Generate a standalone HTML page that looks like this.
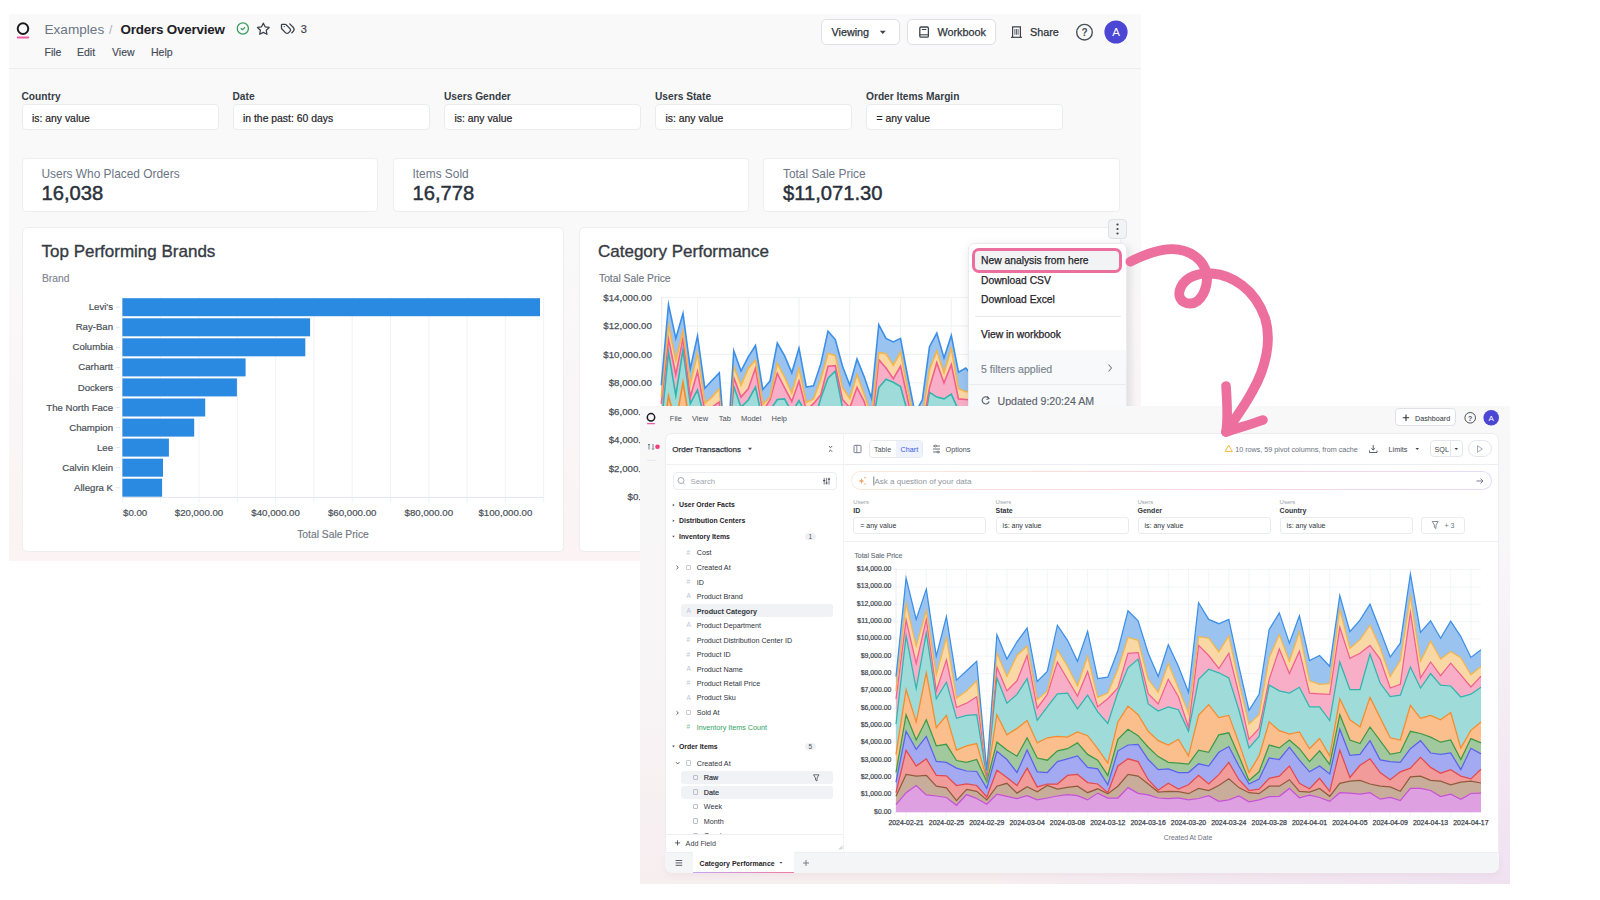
<!DOCTYPE html>
<html><head><meta charset="utf-8"><style>
html,body{margin:0;padding:0;width:1600px;height:900px;overflow:hidden;background:#fff;}
body{position:relative;font-family:"Liberation Sans",sans-serif;}
.t{position:absolute;line-height:1;white-space:nowrap;}
.b{position:absolute;}
svg.b{overflow:visible;}
</style></head><body>
<div class="b" style="left:8.5px;top:14px;width:1132.5px;height:547px;background:linear-gradient(180deg,#f9f9fa 0%,#f9f9fa 40%,#fbf3f4 100%);"></div>
<svg class="b" style="left:0;top:0" width="1600" height="900" viewBox="0 0 1600 900"><circle cx="23" cy="28.6" r="5.3" fill="none" stroke="#1b1b1f" stroke-width="2"/><rect x="16.8" y="36.6" width="12.4" height="1.8" rx="0.9" fill="#f25ca2"/></svg>
<div class="t" style="left:44.5px;top:22.70px;font-size:13.6px;color:#6b7585;font-weight:normal;">Examples</div>
<div class="t" style="left:109px;top:23.50px;font-size:12px;color:#a8aeb6;font-weight:normal;">/</div>
<div class="t" style="left:120.5px;top:22.80px;font-size:13.4px;color:#1d2125;font-weight:bold;letter-spacing:-0.2px;">Orders Overview</div>
<svg class="b" style="left:0;top:0" width="1600" height="900"><g transform="translate(235.4,21.06) scale(0.62)" fill="none" stroke="#3a9c5e" stroke-width="2.1" stroke-linecap="round" stroke-linejoin="round"><circle cx="12" cy="12" r="9"/><path d="M9.3 12.3l1.9 1.6l3.6 -3.1"/></g><g transform="translate(256.3,22.0) scale(0.585)" fill="none" stroke="#3d434b" stroke-width="2.2" stroke-linecap="round" stroke-linejoin="round"><path d="M12 17.75l-6.172 3.245l1.179 -6.873l-5 -4.867l6.9 -1l3.086 -6.253l3.086 6.253l6.9 1l-5 4.867l1.179 6.873z"/></g><g transform="translate(279.4,19.7) scale(0.69)" fill="none" stroke="#3d434b" stroke-width="1.9" stroke-linecap="round" stroke-linejoin="round"><path d="M3 8v4.172a2 2 0 0 0 .586 1.414l5.536 5.536a2.828 2.828 0 0 0 4 0l2.172 -2.172a2.828 2.828 0 0 0 0 -4l-5.536 -5.536a2 2 0 0 0 -1.414 -.586h-4.344a1 1 0 0 0 -1 1z"/><path d="M18 19l1.592 -1.592a4.82 4.82 0 0 0 0 -6.816l-4.592 -4.592"/><path d="M7 10h-.01"/></g></svg>
<div class="t" style="left:300.8px;top:24.00px;font-size:11px;color:#3d434b;font-weight:normal;-webkit-text-stroke:0.2px #3d434b;">3</div>
<div class="t" style="left:44.5px;top:46.85px;font-size:10.5px;color:#444b55;font-weight:normal;-webkit-text-stroke:0.15px #444b55;">File</div>
<div class="t" style="left:77px;top:46.85px;font-size:10.5px;color:#444b55;font-weight:normal;-webkit-text-stroke:0.15px #444b55;">Edit</div>
<div class="t" style="left:112px;top:46.85px;font-size:10.5px;color:#444b55;font-weight:normal;-webkit-text-stroke:0.15px #444b55;">View</div>
<div class="t" style="left:151px;top:46.85px;font-size:10.5px;color:#444b55;font-weight:normal;-webkit-text-stroke:0.15px #444b55;">Help</div>
<div class="b" style="left:8.5px;top:67.5px;width:1132.5px;height:1px;background:#eaedf0;"></div>
<div class="b" style="left:821px;top:18.5px;width:78.5px;height:26.5px;background:#fff;border:1px solid #dde1e6;border-radius:5px;box-sizing:border-box;"></div>
<div class="t" style="left:831.5px;top:27.00px;font-size:10.8px;color:#2e343b;font-weight:normal;-webkit-text-stroke:0.25px #2e343b;">Viewing</div>
<svg class="b" style="left:0;top:0" width="1600" height="900"><path d="M879.8,30.8 L885.8,30.8 L882.8,34 Z" fill="#3d434b"/><rect x="920.5" y="27" width="8" height="10" rx="1" fill="none" stroke="#3d434b" stroke-width="1.2"/><line x1="920.5" y1="34.5" x2="928.5" y2="34.5" stroke="#3d434b" stroke-width="1.2"/><path d="M1012.6,37.2 L1012.6,26.8 L1020.4,26.8 L1020.4,37.2" fill="none" stroke="#3d434b" stroke-width="1.2"/><line x1="1011" y1="37.3" x2="1022" y2="37.3" stroke="#3d434b" stroke-width="1.2"/><path d="M1014.9,29 L1014.9,34.8 M1016.5,29 L1016.5,34.8 M1018.1,29 L1018.1,34.8" stroke="#3d434b" stroke-width="0.8"/><circle cx="1084.5" cy="32.2" r="7.8" fill="none" stroke="#4a5058" stroke-width="1.4"/><circle cx="1116" cy="32" r="11.6" fill="#4b46d3"/></svg>
<div class="b" style="left:907px;top:18.5px;width:89px;height:26.5px;background:#fff;border:1px solid #dde1e6;border-radius:5px;box-sizing:border-box;"></div>
<svg class="b" style="left:0;top:0" width="1600" height="900"><rect x="919.8" y="27" width="8.6" height="10.2" rx="1.2" fill="none" stroke="#3d434b" stroke-width="1.3"/><line x1="919.8" y1="34.8" x2="928.4" y2="34.8" stroke="#3d434b" stroke-width="1.1"/><line x1="921.8" y1="29.5" x2="926.4" y2="29.5" stroke="#3d434b" stroke-width="1.1"/></svg>
<div class="t" style="left:937.5px;top:27.00px;font-size:10.8px;color:#2e343b;font-weight:normal;-webkit-text-stroke:0.25px #2e343b;">Workbook</div>
<div class="t" style="left:1030px;top:27.00px;font-size:10.8px;color:#2e343b;font-weight:normal;-webkit-text-stroke:0.25px #2e343b;">Share</div>
<div class="t" style="left:884.5px;width:400px;text-align:center;top:28.20px;font-size:10px;color:#4a5058;font-weight:bold;">?</div>
<div class="t" style="left:916px;width:400px;text-align:center;top:27.25px;font-size:11.5px;color:#ffffff;font-weight:normal;">A</div>
<div class="t" style="left:21.5px;top:91.50px;font-size:10.2px;color:#373d45;font-weight:bold;">Country</div>
<div class="b" style="left:21.5px;top:104.0px;width:197px;height:26.2px;background:#fff;border:1px solid #e9ecef;border-radius:4px;box-sizing:border-box;"></div>
<div class="t" style="left:32.0px;top:114.20px;font-size:10.4px;color:#1f2328;font-weight:normal;-webkit-text-stroke:0.2px #1f2328;">is: any value</div>
<div class="t" style="left:232.5px;top:91.50px;font-size:10.2px;color:#373d45;font-weight:bold;">Date</div>
<div class="b" style="left:232.5px;top:104.0px;width:197px;height:26.2px;background:#fff;border:1px solid #e9ecef;border-radius:4px;box-sizing:border-box;"></div>
<div class="t" style="left:243.0px;top:114.20px;font-size:10.4px;color:#1f2328;font-weight:normal;-webkit-text-stroke:0.2px #1f2328;">in the past: 60 days</div>
<div class="t" style="left:444px;top:91.50px;font-size:10.2px;color:#373d45;font-weight:bold;">Users Gender</div>
<div class="b" style="left:444px;top:104.0px;width:197px;height:26.2px;background:#fff;border:1px solid #e9ecef;border-radius:4px;box-sizing:border-box;"></div>
<div class="t" style="left:454.5px;top:114.20px;font-size:10.4px;color:#1f2328;font-weight:normal;-webkit-text-stroke:0.2px #1f2328;">is: any value</div>
<div class="t" style="left:655px;top:91.50px;font-size:10.2px;color:#373d45;font-weight:bold;">Users State</div>
<div class="b" style="left:655px;top:104.0px;width:197px;height:26.2px;background:#fff;border:1px solid #e9ecef;border-radius:4px;box-sizing:border-box;"></div>
<div class="t" style="left:665.5px;top:114.20px;font-size:10.4px;color:#1f2328;font-weight:normal;-webkit-text-stroke:0.2px #1f2328;">is: any value</div>
<div class="t" style="left:866px;top:91.50px;font-size:10.2px;color:#373d45;font-weight:bold;">Order Items Margin</div>
<div class="b" style="left:866px;top:104.0px;width:197px;height:26.2px;background:#fff;border:1px solid #e9ecef;border-radius:4px;box-sizing:border-box;"></div>
<div class="t" style="left:876.5px;top:114.20px;font-size:10.4px;color:#1f2328;font-weight:normal;-webkit-text-stroke:0.2px #1f2328;">= any value</div>
<div class="b" style="left:21.5px;top:157.5px;width:356.5px;height:54px;background:#fff;border:1px solid #eceef1;border-radius:4px;box-sizing:border-box;"></div>
<div class="t" style="left:41.5px;top:169.35px;font-size:11.9px;color:#6b7585;font-weight:normal;">Users Who Placed Orders</div>
<div class="t" style="left:41.5px;top:183.30px;font-size:20.2px;color:#2a313b;font-weight:normal;-webkit-text-stroke:0.45px #2a313b;">16,038</div>
<div class="b" style="left:392.5px;top:157.5px;width:356.5px;height:54px;background:#fff;border:1px solid #eceef1;border-radius:4px;box-sizing:border-box;"></div>
<div class="t" style="left:412.5px;top:169.35px;font-size:11.9px;color:#6b7585;font-weight:normal;">Items Sold</div>
<div class="t" style="left:412.5px;top:183.30px;font-size:20.2px;color:#2a313b;font-weight:normal;-webkit-text-stroke:0.45px #2a313b;">16,778</div>
<div class="b" style="left:763px;top:157.5px;width:357px;height:54px;background:#fff;border:1px solid #eceef1;border-radius:4px;box-sizing:border-box;"></div>
<div class="t" style="left:783px;top:169.35px;font-size:11.9px;color:#6b7585;font-weight:normal;">Total Sale Price</div>
<div class="t" style="left:783px;top:183.30px;font-size:20.2px;color:#2a313b;font-weight:normal;-webkit-text-stroke:0.45px #2a313b;">$11,071.30</div>
<div class="b" style="left:22px;top:227px;width:542px;height:325px;background:#fff;border:1px solid #eceef1;border-radius:5px;box-sizing:border-box;"></div>
<div class="b" style="left:578.5px;top:227px;width:542px;height:325px;background:#fff;border:1px solid #eceef1;border-radius:5px;box-sizing:border-box;"></div>
<div class="t" style="left:41.5px;top:243.30px;font-size:17px;color:#353b43;font-weight:normal;-webkit-text-stroke:0.35px #353b43;">Top Performing Brands</div>
<div class="t" style="left:42px;top:274.05px;font-size:10.3px;color:#7d8591;font-weight:normal;-webkit-text-stroke:0.15px #7d8591;">Brand</div>
<svg class="b" style="left:0;top:0" width="1600" height="900"><line x1="122.4" y1="297" x2="122.4" y2="502.5" stroke="#f0f2f5" stroke-width="1"/><line x1="160.7" y1="297" x2="160.7" y2="502.5" stroke="#f0f2f5" stroke-width="1"/><line x1="199.0" y1="297" x2="199.0" y2="502.5" stroke="#f0f2f5" stroke-width="1"/><line x1="237.3" y1="297" x2="237.3" y2="502.5" stroke="#f0f2f5" stroke-width="1"/><line x1="275.6" y1="297" x2="275.6" y2="502.5" stroke="#f0f2f5" stroke-width="1"/><line x1="313.9" y1="297" x2="313.9" y2="502.5" stroke="#f0f2f5" stroke-width="1"/><line x1="352.2" y1="297" x2="352.2" y2="502.5" stroke="#f0f2f5" stroke-width="1"/><line x1="390.5" y1="297" x2="390.5" y2="502.5" stroke="#f0f2f5" stroke-width="1"/><line x1="428.8" y1="297" x2="428.8" y2="502.5" stroke="#f0f2f5" stroke-width="1"/><line x1="467.1" y1="297" x2="467.1" y2="502.5" stroke="#f0f2f5" stroke-width="1"/><line x1="505.4" y1="297" x2="505.4" y2="502.5" stroke="#f0f2f5" stroke-width="1"/><line x1="543.7" y1="297" x2="543.7" y2="502.5" stroke="#f0f2f5" stroke-width="1"/><line x1="122.4" y1="497.4" x2="543.6" y2="497.4" stroke="#e3e6ec" stroke-width="1"/><rect x="122.4" y="298.2" width="417.6" height="18" fill="#2a89e0"/><line x1="116" y1="307.2" x2="120" y2="307.2" stroke="#e3e6ec" stroke-width="1"/><rect x="122.4" y="318.3" width="187.7" height="18" fill="#2a89e0"/><line x1="116" y1="327.3" x2="120" y2="327.3" stroke="#e3e6ec" stroke-width="1"/><rect x="122.4" y="338.3" width="182.9" height="18" fill="#2a89e0"/><line x1="116" y1="347.3" x2="120" y2="347.3" stroke="#e3e6ec" stroke-width="1"/><rect x="122.4" y="358.4" width="123.2" height="18" fill="#2a89e0"/><line x1="116" y1="367.4" x2="120" y2="367.4" stroke="#e3e6ec" stroke-width="1"/><rect x="122.4" y="378.4" width="114.5" height="18" fill="#2a89e0"/><line x1="116" y1="387.4" x2="120" y2="387.4" stroke="#e3e6ec" stroke-width="1"/><rect x="122.4" y="398.5" width="82.8" height="18" fill="#2a89e0"/><line x1="116" y1="407.5" x2="120" y2="407.5" stroke="#e3e6ec" stroke-width="1"/><rect x="122.4" y="418.6" width="71.8" height="18" fill="#2a89e0"/><line x1="116" y1="427.6" x2="120" y2="427.6" stroke="#e3e6ec" stroke-width="1"/><rect x="122.4" y="438.6" width="46.5" height="18" fill="#2a89e0"/><line x1="116" y1="447.6" x2="120" y2="447.6" stroke="#e3e6ec" stroke-width="1"/><rect x="122.4" y="458.7" width="40.6" height="18" fill="#2a89e0"/><line x1="116" y1="467.7" x2="120" y2="467.7" stroke="#e3e6ec" stroke-width="1"/><rect x="122.4" y="478.7" width="39.7" height="18" fill="#2a89e0"/><line x1="116" y1="487.7" x2="120" y2="487.7" stroke="#e3e6ec" stroke-width="1"/></svg>
<div class="t" style="right:1487px;top:302.30px;font-size:9.6px;color:#4a5058;font-weight:normal;-webkit-text-stroke:0.2px #4a5058;">Levi's</div>
<div class="t" style="right:1487px;top:322.36px;font-size:9.6px;color:#4a5058;font-weight:normal;-webkit-text-stroke:0.2px #4a5058;">Ray-Ban</div>
<div class="t" style="right:1487px;top:342.42px;font-size:9.6px;color:#4a5058;font-weight:normal;-webkit-text-stroke:0.2px #4a5058;">Columbia</div>
<div class="t" style="right:1487px;top:362.48px;font-size:9.6px;color:#4a5058;font-weight:normal;-webkit-text-stroke:0.2px #4a5058;">Carhartt</div>
<div class="t" style="right:1487px;top:382.54px;font-size:9.6px;color:#4a5058;font-weight:normal;-webkit-text-stroke:0.2px #4a5058;">Dockers</div>
<div class="t" style="right:1487px;top:402.60px;font-size:9.6px;color:#4a5058;font-weight:normal;-webkit-text-stroke:0.2px #4a5058;">The North Face</div>
<div class="t" style="right:1487px;top:422.66px;font-size:9.6px;color:#4a5058;font-weight:normal;-webkit-text-stroke:0.2px #4a5058;">Champion</div>
<div class="t" style="right:1487px;top:442.72px;font-size:9.6px;color:#4a5058;font-weight:normal;-webkit-text-stroke:0.2px #4a5058;">Lee</div>
<div class="t" style="right:1487px;top:462.78px;font-size:9.6px;color:#4a5058;font-weight:normal;-webkit-text-stroke:0.2px #4a5058;">Calvin Klein</div>
<div class="t" style="right:1487px;top:482.84px;font-size:9.6px;color:#4a5058;font-weight:normal;-webkit-text-stroke:0.2px #4a5058;">Allegra K</div>
<div class="t" style="left:123px;top:507.85px;font-size:9.7px;color:#4a5058;font-weight:normal;-webkit-text-stroke:0.2px #4a5058;">$0.00</div>
<div class="t" style="left:-1.0px;width:400px;text-align:center;top:507.85px;font-size:9.7px;color:#4a5058;font-weight:normal;-webkit-text-stroke:0.2px #4a5058;">$20,000.00</div>
<div class="t" style="left:75.60000000000002px;width:400px;text-align:center;top:507.85px;font-size:9.7px;color:#4a5058;font-weight:normal;-webkit-text-stroke:0.2px #4a5058;">$40,000.00</div>
<div class="t" style="left:152.2px;width:400px;text-align:center;top:507.85px;font-size:9.7px;color:#4a5058;font-weight:normal;-webkit-text-stroke:0.2px #4a5058;">$60,000.00</div>
<div class="t" style="left:228.79999999999995px;width:400px;text-align:center;top:507.85px;font-size:9.7px;color:#4a5058;font-weight:normal;-webkit-text-stroke:0.2px #4a5058;">$80,000.00</div>
<div class="t" style="left:305.4px;width:400px;text-align:center;top:507.85px;font-size:9.7px;color:#4a5058;font-weight:normal;-webkit-text-stroke:0.2px #4a5058;">$100,000.00</div>
<div class="t" style="left:133px;width:400px;text-align:center;top:530.35px;font-size:10.3px;color:#6f7783;font-weight:normal;-webkit-text-stroke:0.15px #6f7783;">Total Sale Price</div>
<div class="t" style="left:598px;top:243.30px;font-size:17px;color:#353b43;font-weight:normal;-webkit-text-stroke:0.35px #353b43;">Category Performance</div>
<div class="t" style="left:599px;top:273.85px;font-size:10.3px;color:#6f7783;font-weight:normal;-webkit-text-stroke:0.15px #6f7783;">Total Sale Price</div>
<div class="t" style="right:948.2px;top:492.35px;font-size:9.7px;color:#4a5058;font-weight:normal;-webkit-text-stroke:0.25px #4a5058;">$0.00</div>
<div class="t" style="right:948.2px;top:463.85px;font-size:9.7px;color:#4a5058;font-weight:normal;-webkit-text-stroke:0.25px #4a5058;">$2,000.00</div>
<div class="t" style="right:948.2px;top:435.35px;font-size:9.7px;color:#4a5058;font-weight:normal;-webkit-text-stroke:0.25px #4a5058;">$4,000.00</div>
<div class="t" style="right:948.2px;top:406.85px;font-size:9.7px;color:#4a5058;font-weight:normal;-webkit-text-stroke:0.25px #4a5058;">$6,000.00</div>
<div class="t" style="right:948.2px;top:378.35px;font-size:9.7px;color:#4a5058;font-weight:normal;-webkit-text-stroke:0.25px #4a5058;">$8,000.00</div>
<div class="t" style="right:948.2px;top:349.85px;font-size:9.7px;color:#4a5058;font-weight:normal;-webkit-text-stroke:0.25px #4a5058;">$10,000.00</div>
<div class="t" style="right:948.2px;top:321.35px;font-size:9.7px;color:#4a5058;font-weight:normal;-webkit-text-stroke:0.25px #4a5058;">$12,000.00</div>
<div class="t" style="right:948.2px;top:292.85px;font-size:9.7px;color:#4a5058;font-weight:normal;-webkit-text-stroke:0.25px #4a5058;">$14,000.00</div>
<svg class="b" style="left:0;top:0" width="1600" height="900"><defs><clipPath id="c1"><rect x="640" y="280" width="470" height="126"/></clipPath></defs><g clip-path="url(#c1)"><line x1="661.3" y1="496.9" x2="1082" y2="496.9" stroke="#eef0f4" stroke-width="1"/><line x1="661.3" y1="468.4" x2="1082" y2="468.4" stroke="#eef0f4" stroke-width="1"/><line x1="661.3" y1="439.9" x2="1082" y2="439.9" stroke="#eef0f4" stroke-width="1"/><line x1="661.3" y1="411.4" x2="1082" y2="411.4" stroke="#eef0f4" stroke-width="1"/><line x1="661.3" y1="382.9" x2="1082" y2="382.9" stroke="#eef0f4" stroke-width="1"/><line x1="661.3" y1="354.4" x2="1082" y2="354.4" stroke="#eef0f4" stroke-width="1"/><line x1="661.3" y1="325.9" x2="1082" y2="325.9" stroke="#eef0f4" stroke-width="1"/><line x1="661.3" y1="297.4" x2="1082" y2="297.4" stroke="#eef0f4" stroke-width="1"/><line x1="697.5" y1="297" x2="697.5" y2="497" stroke="#eef0f4" stroke-width="1"/><line x1="748.3" y1="297" x2="748.3" y2="497" stroke="#eef0f4" stroke-width="1"/><line x1="799.0" y1="297" x2="799.0" y2="497" stroke="#eef0f4" stroke-width="1"/><line x1="849.8" y1="297" x2="849.8" y2="497" stroke="#eef0f4" stroke-width="1"/><line x1="900.5" y1="297" x2="900.5" y2="497" stroke="#eef0f4" stroke-width="1"/><line x1="951.3" y1="297" x2="951.3" y2="497" stroke="#eef0f4" stroke-width="1"/><line x1="1002.0" y1="297" x2="1002.0" y2="497" stroke="#eef0f4" stroke-width="1"/><line x1="1052.8" y1="297" x2="1052.8" y2="497" stroke="#eef0f4" stroke-width="1"/><line x1="661.8" y1="297" x2="661.8" y2="497" stroke="#e3e6ec" stroke-width="1"/><path d="M661.3,490.7 L668.5,480.9 L675.8,474.9 L683.0,482.6 L690.3,483.6 L697.5,484.8 L704.8,491.2 L712.0,482.4 L719.3,485.6 L726.5,490.4 L733.8,482.1 L741.0,483.8 L748.3,485.6 L755.5,483.2 L762.8,486.8 L770.0,485.3 L777.3,483.6 L784.5,482.4 L791.8,483.2 L799.0,486.8 L806.3,481.2 L813.5,485.3 L820.8,485.3 L828.0,476.7 L835.3,481.5 L842.5,482.6 L849.8,485.3 L857.0,485.6 L864.3,485.0 L871.5,486.8 L878.8,485.6 L886.0,483.2 L893.3,488.0 L900.5,486.8 L907.8,483.6 L915.0,488.3 L922.3,486.8 L929.5,484.1 L936.8,483.8 L944.0,477.3 L951.3,485.0 L958.5,482.9 L965.8,484.8 L973.0,488.0 L980.3,480.9 L987.5,481.2 L994.8,482.1 L1002.0,480.9 L1009.3,486.2 L1016.5,484.8 L1023.8,487.4 L1031.0,477.3 L1038.3,477.3 L1045.5,479.1 L1052.8,484.1 L1060.0,482.1 L1067.3,486.2 L1074.5,481.5 L1081.8,481.2 L1081.8,496.9 L1074.5,496.9 L1067.3,496.9 L1060.0,496.9 L1052.8,496.9 L1045.5,496.9 L1038.3,496.9 L1031.0,496.9 L1023.8,496.9 L1016.5,496.9 L1009.3,496.9 L1002.0,496.9 L994.8,496.9 L987.5,496.9 L980.3,496.9 L973.0,496.9 L965.8,496.9 L958.5,496.9 L951.3,496.9 L944.0,496.9 L936.8,496.9 L929.5,496.9 L922.3,496.9 L915.0,496.9 L907.8,496.9 L900.5,496.9 L893.3,496.9 L886.0,496.9 L878.8,496.9 L871.5,496.9 L864.3,496.9 L857.0,496.9 L849.8,496.9 L842.5,496.9 L835.3,496.9 L828.0,496.9 L820.8,496.9 L813.5,496.9 L806.3,496.9 L799.0,496.9 L791.8,496.9 L784.5,496.9 L777.3,496.9 L770.0,496.9 L762.8,496.9 L755.5,496.9 L748.3,496.9 L741.0,496.9 L733.8,496.9 L726.5,496.9 L719.3,496.9 L712.0,496.9 L704.8,496.9 L697.5,496.9 L690.3,496.9 L683.0,496.9 L675.8,496.9 L668.5,496.9 L661.3,496.9Z" fill="#dfa0e1"/>
<path d="M661.3,483.8 L668.5,465.8 L675.8,467.2 L683.0,466.6 L690.3,475.5 L697.5,476.9 L704.8,487.4 L712.0,478.1 L719.3,479.7 L726.5,486.8 L733.8,475.5 L741.0,473.1 L748.3,481.2 L755.5,475.9 L762.8,480.0 L770.0,474.9 L777.3,477.9 L784.5,476.5 L791.8,475.5 L799.0,480.9 L806.3,477.7 L813.5,481.7 L820.8,475.5 L828.0,465.8 L835.3,467.2 L842.5,473.7 L849.8,480.3 L857.0,479.7 L864.3,480.0 L871.5,481.7 L878.8,477.3 L886.0,479.1 L893.3,474.9 L900.5,469.4 L907.8,476.7 L915.0,480.9 L922.3,481.7 L929.5,475.5 L936.8,475.5 L944.0,470.2 L951.3,479.7 L958.5,480.3 L965.8,477.3 L973.0,483.8 L980.3,473.1 L987.5,471.4 L994.8,470.8 L1002.0,473.7 L1009.3,475.5 L1016.5,476.1 L1023.8,479.7 L1031.0,467.8 L1038.3,467.2 L1045.5,470.8 L1052.8,471.4 L1060.0,474.3 L1067.3,472.2 L1074.5,471.3 L1081.8,472.9 L1081.8,481.2 L1074.5,481.5 L1067.3,486.2 L1060.0,482.1 L1052.8,484.1 L1045.5,479.1 L1038.3,477.3 L1031.0,477.3 L1023.8,487.4 L1016.5,484.8 L1009.3,486.2 L1002.0,480.9 L994.8,482.1 L987.5,481.2 L980.3,480.9 L973.0,488.0 L965.8,484.8 L958.5,482.9 L951.3,485.0 L944.0,477.3 L936.8,483.8 L929.5,484.1 L922.3,486.8 L915.0,488.3 L907.8,483.6 L900.5,486.8 L893.3,488.0 L886.0,483.2 L878.8,485.6 L871.5,486.8 L864.3,485.0 L857.0,485.6 L849.8,485.3 L842.5,482.6 L835.3,481.5 L828.0,476.7 L820.8,485.3 L813.5,485.3 L806.3,481.2 L799.0,486.8 L791.8,483.2 L784.5,482.4 L777.3,483.6 L770.0,485.3 L762.8,486.8 L755.5,483.2 L748.3,485.6 L741.0,483.8 L733.8,482.1 L726.5,490.4 L719.3,485.6 L712.0,482.4 L704.8,491.2 L697.5,484.8 L690.3,483.6 L683.0,482.6 L675.8,474.9 L668.5,480.9 L661.3,490.7Z" fill="#c9ad9b"/>
<path d="M661.3,480.9 L668.5,446.1 L675.8,458.9 L683.0,453.2 L690.3,466.6 L697.5,467.0 L704.8,474.9 L712.0,473.7 L719.3,474.9 L726.5,484.4 L733.8,462.5 L741.0,468.4 L748.3,474.9 L755.5,460.7 L762.8,476.1 L770.0,473.7 L777.3,473.7 L784.5,466.6 L791.8,465.8 L799.0,472.6 L806.3,473.7 L813.5,480.9 L820.8,458.9 L828.0,453.0 L835.3,455.3 L842.5,470.2 L849.8,478.8 L857.0,473.1 L864.3,477.9 L871.5,474.3 L878.8,466.6 L886.0,473.7 L893.3,466.0 L900.5,455.9 L907.8,470.2 L915.0,479.1 L922.3,477.9 L929.5,469.0 L936.8,467.2 L944.0,458.9 L951.3,473.1 L958.5,477.7 L965.8,469.0 L973.0,479.7 L980.3,445.8 L987.5,468.4 L994.8,458.3 L1002.0,453.0 L1009.3,464.2 L1016.5,470.2 L1023.8,463.7 L1031.0,460.7 L1038.3,451.8 L1045.5,460.1 L1052.8,464.8 L1060.0,461.9 L1067.3,467.2 L1074.5,469.5 L1081.8,461.5 L1081.8,472.9 L1074.5,471.3 L1067.3,472.2 L1060.0,474.3 L1052.8,471.4 L1045.5,470.8 L1038.3,467.2 L1031.0,467.8 L1023.8,479.7 L1016.5,476.1 L1009.3,475.5 L1002.0,473.7 L994.8,470.8 L987.5,471.4 L980.3,473.1 L973.0,483.8 L965.8,477.3 L958.5,480.3 L951.3,479.7 L944.0,470.2 L936.8,475.5 L929.5,475.5 L922.3,481.7 L915.0,480.9 L907.8,476.7 L900.5,469.4 L893.3,474.9 L886.0,479.1 L878.8,477.3 L871.5,481.7 L864.3,480.0 L857.0,479.7 L849.8,480.3 L842.5,473.7 L835.3,467.2 L828.0,465.8 L820.8,475.5 L813.5,481.7 L806.3,477.7 L799.0,480.9 L791.8,475.5 L784.5,476.5 L777.3,477.9 L770.0,474.9 L762.8,480.0 L755.5,475.9 L748.3,481.2 L741.0,473.1 L733.8,475.5 L726.5,486.8 L719.3,479.7 L712.0,478.1 L704.8,487.4 L697.5,476.9 L690.3,475.5 L683.0,466.6 L675.8,467.2 L668.5,465.8 L661.3,483.8Z" fill="#f29b9b"/>
<path d="M661.3,472.2 L668.5,430.4 L675.8,445.2 L683.0,434.6 L690.3,455.1 L697.5,455.9 L704.8,460.7 L712.0,463.1 L719.3,463.4 L726.5,477.3 L733.8,446.8 L741.0,453.6 L748.3,464.2 L755.5,445.8 L762.8,463.7 L770.0,464.2 L777.3,455.3 L784.5,453.0 L791.8,450.6 L799.0,460.1 L806.3,461.3 L813.5,474.3 L820.8,446.4 L828.0,441.7 L835.3,441.1 L842.5,453.6 L849.8,461.9 L857.0,461.3 L864.3,464.2 L871.5,464.2 L878.8,457.1 L886.0,458.9 L893.3,447.6 L900.5,442.9 L907.8,458.9 L915.0,473.7 L922.3,469.6 L929.5,452.4 L936.8,453.6 L944.0,443.5 L951.3,454.1 L958.5,463.7 L965.8,458.9 L973.0,465.4 L980.3,428.6 L987.5,450.2 L994.8,449.4 L1002.0,438.1 L1009.3,453.9 L1016.5,455.3 L1023.8,455.9 L1031.0,444.6 L1038.3,438.1 L1045.5,448.2 L1052.8,449.4 L1060.0,448.2 L1067.3,461.9 L1074.5,444.4 L1081.8,449.0 L1081.8,461.5 L1074.5,469.5 L1067.3,467.2 L1060.0,461.9 L1052.8,464.8 L1045.5,460.1 L1038.3,451.8 L1031.0,460.7 L1023.8,463.7 L1016.5,470.2 L1009.3,464.2 L1002.0,453.0 L994.8,458.3 L987.5,468.4 L980.3,445.8 L973.0,479.7 L965.8,469.0 L958.5,477.7 L951.3,473.1 L944.0,458.9 L936.8,467.2 L929.5,469.0 L922.3,477.9 L915.0,479.1 L907.8,470.2 L900.5,455.9 L893.3,466.0 L886.0,473.7 L878.8,466.6 L871.5,474.3 L864.3,477.9 L857.0,473.1 L849.8,478.8 L842.5,470.2 L835.3,455.3 L828.0,453.0 L820.8,458.9 L813.5,480.9 L806.3,473.7 L799.0,472.6 L791.8,465.8 L784.5,466.6 L777.3,473.7 L770.0,473.7 L762.8,476.1 L755.5,460.7 L748.3,474.9 L741.0,468.4 L733.8,462.5 L726.5,484.4 L719.3,474.9 L712.0,473.7 L704.8,474.9 L697.5,467.0 L690.3,466.6 L683.0,453.2 L675.8,458.9 L668.5,446.1 L661.3,480.9Z" fill="#a4aaf2"/>
<path d="M661.3,464.2 L668.5,416.7 L675.8,437.5 L683.0,420.9 L690.3,442.3 L697.5,441.1 L704.8,454.4 L712.0,455.9 L719.3,453.6 L726.5,471.7 L733.8,439.3 L741.0,445.8 L748.3,450.8 L755.5,435.7 L762.8,452.4 L770.0,454.1 L777.3,446.4 L784.5,444.6 L791.8,439.9 L799.0,449.4 L806.3,454.1 L813.5,466.6 L820.8,436.9 L828.0,428.6 L835.3,434.0 L842.5,443.5 L849.8,451.2 L857.0,455.9 L864.3,456.5 L871.5,457.5 L878.8,445.8 L886.0,447.6 L893.3,433.4 L900.5,431.6 L907.8,450.6 L915.0,470.8 L922.3,463.7 L929.5,441.7 L936.8,444.1 L944.0,437.5 L951.3,444.6 L958.5,455.3 L965.8,446.4 L973.0,457.7 L980.3,416.7 L987.5,437.5 L994.8,440.5 L1002.0,426.8 L1009.3,438.1 L1016.5,449.4 L1023.8,447.6 L1031.0,430.4 L1038.3,432.2 L1045.5,435.2 L1052.8,439.3 L1060.0,437.5 L1067.3,453.6 L1074.5,436.4 L1081.8,439.8 L1081.8,449.0 L1074.5,444.4 L1067.3,461.9 L1060.0,448.2 L1052.8,449.4 L1045.5,448.2 L1038.3,438.1 L1031.0,444.6 L1023.8,455.9 L1016.5,455.3 L1009.3,453.9 L1002.0,438.1 L994.8,449.4 L987.5,450.2 L980.3,428.6 L973.0,465.4 L965.8,458.9 L958.5,463.7 L951.3,454.1 L944.0,443.5 L936.8,453.6 L929.5,452.4 L922.3,469.6 L915.0,473.7 L907.8,458.9 L900.5,442.9 L893.3,447.6 L886.0,458.9 L878.8,457.1 L871.5,464.2 L864.3,464.2 L857.0,461.3 L849.8,461.9 L842.5,453.6 L835.3,441.1 L828.0,441.7 L820.8,446.4 L813.5,474.3 L806.3,461.3 L799.0,460.1 L791.8,450.6 L784.5,453.0 L777.3,455.3 L770.0,464.2 L762.8,463.7 L755.5,445.8 L748.3,464.2 L741.0,453.6 L733.8,446.8 L726.5,477.3 L719.3,463.4 L712.0,463.1 L704.8,460.7 L697.5,455.9 L690.3,455.1 L683.0,434.6 L675.8,445.2 L668.5,430.4 L661.3,472.2Z" fill="#a2c89e"/>
<path d="M661.3,449.4 L668.5,396.0 L675.8,422.7 L683.0,382.3 L690.3,427.4 L697.5,417.3 L704.8,445.8 L712.0,442.3 L719.3,440.5 L726.5,469.6 L733.8,416.7 L741.0,433.4 L748.3,428.0 L755.5,421.5 L762.8,439.9 L770.0,435.7 L777.3,434.6 L784.5,435.2 L791.8,431.0 L799.0,434.0 L806.3,444.6 L813.5,456.5 L820.8,422.7 L828.0,409.6 L835.3,416.7 L842.5,430.4 L849.8,438.1 L857.0,441.7 L864.3,436.9 L871.5,450.6 L878.8,417.3 L886.0,408.4 L893.3,419.1 L900.5,417.3 L907.8,439.9 L915.0,464.2 L922.3,450.6 L929.5,422.7 L936.8,429.8 L944.0,432.8 L951.3,431.0 L958.5,444.6 L965.8,436.3 L973.0,450.6 L980.3,403.7 L987.5,420.9 L994.8,426.8 L1002.0,402.5 L1009.3,419.1 L1016.5,435.7 L1023.8,437.5 L1031.0,409.0 L1038.3,419.7 L1045.5,417.3 L1052.8,420.9 L1060.0,415.0 L1067.3,444.2 L1074.5,429.6 L1081.8,422.7 L1081.8,439.8 L1074.5,436.4 L1067.3,453.6 L1060.0,437.5 L1052.8,439.3 L1045.5,435.2 L1038.3,432.2 L1031.0,430.4 L1023.8,447.6 L1016.5,449.4 L1009.3,438.1 L1002.0,426.8 L994.8,440.5 L987.5,437.5 L980.3,416.7 L973.0,457.7 L965.8,446.4 L958.5,455.3 L951.3,444.6 L944.0,437.5 L936.8,444.1 L929.5,441.7 L922.3,463.7 L915.0,470.8 L907.8,450.6 L900.5,431.6 L893.3,433.4 L886.0,447.6 L878.8,445.8 L871.5,457.5 L864.3,456.5 L857.0,455.9 L849.8,451.2 L842.5,443.5 L835.3,434.0 L828.0,428.6 L820.8,436.9 L813.5,466.6 L806.3,454.1 L799.0,449.4 L791.8,439.9 L784.5,444.6 L777.3,446.4 L770.0,454.1 L762.8,452.4 L755.5,435.7 L748.3,450.8 L741.0,445.8 L733.8,439.3 L726.5,471.7 L719.3,453.6 L712.0,455.9 L704.8,454.4 L697.5,441.1 L690.3,442.3 L683.0,420.9 L675.8,437.5 L668.5,416.7 L661.3,464.2Z" fill="#fbbf8e"/>
<path d="M661.3,424.5 L668.5,352.0 L675.8,395.4 L683.0,349.7 L690.3,403.7 L697.5,390.0 L704.8,419.7 L712.0,417.3 L719.3,416.7 L726.5,468.4 L733.8,386.5 L741.0,407.2 L748.3,400.0 L755.5,387.1 L762.8,421.4 L770.0,410.2 L777.3,399.5 L784.5,398.9 L791.8,412.0 L799.0,400.7 L806.3,414.4 L813.5,423.9 L820.8,398.3 L828.0,378.2 L835.3,371.0 L842.5,407.8 L849.8,413.8 L857.0,410.2 L864.3,412.6 L871.5,430.4 L878.8,387.6 L886.0,379.3 L893.3,382.3 L900.5,386.5 L907.8,412.8 L915.0,444.1 L922.3,434.6 L929.5,392.4 L936.8,397.1 L944.0,398.9 L951.3,394.2 L958.5,410.2 L965.8,410.2 L973.0,421.5 L980.3,373.4 L987.5,396.0 L994.8,396.0 L1002.0,366.9 L1009.3,390.6 L1016.5,401.9 L1023.8,400.7 L1031.0,377.6 L1038.3,394.8 L1045.5,382.9 L1052.8,392.4 L1060.0,393.2 L1067.3,402.1 L1074.5,399.9 L1081.8,394.1 L1081.8,422.7 L1074.5,429.6 L1067.3,444.2 L1060.0,415.0 L1052.8,420.9 L1045.5,417.3 L1038.3,419.7 L1031.0,409.0 L1023.8,437.5 L1016.5,435.7 L1009.3,419.1 L1002.0,402.5 L994.8,426.8 L987.5,420.9 L980.3,403.7 L973.0,450.6 L965.8,436.3 L958.5,444.6 L951.3,431.0 L944.0,432.8 L936.8,429.8 L929.5,422.7 L922.3,450.6 L915.0,464.2 L907.8,439.9 L900.5,417.3 L893.3,419.1 L886.0,408.4 L878.8,417.3 L871.5,450.6 L864.3,436.9 L857.0,441.7 L849.8,438.1 L842.5,430.4 L835.3,416.7 L828.0,409.6 L820.8,422.7 L813.5,456.5 L806.3,444.6 L799.0,434.0 L791.8,431.0 L784.5,435.2 L777.3,434.6 L770.0,435.7 L762.8,439.9 L755.5,421.5 L748.3,428.0 L741.0,433.4 L733.8,416.7 L726.5,469.6 L719.3,440.5 L712.0,442.3 L704.8,445.8 L697.5,417.3 L690.3,427.4 L683.0,382.3 L675.8,422.7 L668.5,396.0 L661.3,449.4Z" fill="#9edbd9"/>
<path d="M661.3,403.7 L668.5,339.0 L675.8,374.6 L683.0,338.4 L690.3,397.1 L697.5,371.6 L704.8,410.8 L712.0,407.2 L719.3,401.9 L726.5,466.0 L733.8,377.6 L741.0,397.1 L748.3,388.8 L755.5,368.1 L762.8,411.4 L770.0,400.0 L777.3,373.4 L784.5,387.6 L791.8,401.4 L799.0,381.1 L806.3,410.2 L813.5,403.7 L820.8,394.8 L828.0,366.3 L835.3,365.7 L842.5,399.5 L849.8,407.8 L857.0,387.6 L864.3,401.9 L871.5,427.1 L878.8,359.7 L886.0,368.1 L893.3,378.7 L900.5,366.3 L907.8,399.5 L915.0,436.9 L922.3,428.0 L929.5,387.6 L936.8,362.7 L944.0,382.9 L951.3,364.5 L958.5,398.9 L965.8,399.5 L973.0,400.0 L980.3,344.9 L987.5,370.4 L994.8,366.3 L1002.0,359.7 L1009.3,371.0 L1016.5,394.8 L1023.8,391.8 L1031.0,332.4 L1038.3,386.5 L1045.5,373.4 L1052.8,384.7 L1060.0,374.3 L1067.3,384.0 L1074.5,394.0 L1081.8,385.0 L1081.8,394.1 L1074.5,399.9 L1067.3,402.1 L1060.0,393.2 L1052.8,392.4 L1045.5,382.9 L1038.3,394.8 L1031.0,377.6 L1023.8,400.7 L1016.5,401.9 L1009.3,390.6 L1002.0,366.9 L994.8,396.0 L987.5,396.0 L980.3,373.4 L973.0,421.5 L965.8,410.2 L958.5,410.2 L951.3,394.2 L944.0,398.9 L936.8,397.1 L929.5,392.4 L922.3,434.6 L915.0,444.1 L907.8,412.8 L900.5,386.5 L893.3,382.3 L886.0,379.3 L878.8,387.6 L871.5,430.4 L864.3,412.6 L857.0,410.2 L849.8,413.8 L842.5,407.8 L835.3,371.0 L828.0,378.2 L820.8,398.3 L813.5,423.9 L806.3,414.4 L799.0,400.7 L791.8,412.0 L784.5,398.9 L777.3,399.5 L770.0,410.2 L762.8,421.4 L755.5,387.1 L748.3,400.0 L741.0,407.2 L733.8,386.5 L726.5,468.4 L719.3,416.7 L712.0,417.3 L704.8,419.7 L697.5,390.0 L690.3,403.7 L683.0,349.7 L675.8,395.4 L668.5,352.0 L661.3,424.5Z" fill="#f9aec8"/>
<path d="M661.3,397.1 L668.5,325.3 L675.8,360.3 L683.0,331.2 L690.3,384.1 L697.5,353.2 L704.8,403.1 L712.0,397.1 L719.3,388.8 L726.5,463.7 L733.8,366.3 L741.0,385.3 L748.3,368.1 L755.5,360.3 L762.8,404.3 L770.0,397.1 L777.3,363.3 L784.5,377.0 L791.8,393.0 L799.0,368.6 L806.3,402.5 L813.5,398.9 L820.8,379.3 L828.0,353.2 L835.3,355.6 L842.5,387.6 L849.8,398.3 L857.0,374.6 L864.3,394.8 L871.5,415.7 L878.8,352.6 L886.0,353.8 L893.3,365.1 L900.5,352.0 L907.8,390.0 L915.0,424.5 L922.3,416.7 L929.5,369.8 L936.8,350.8 L944.0,372.8 L951.3,348.5 L958.5,388.8 L965.8,391.8 L973.0,391.2 L980.3,330.1 L987.5,362.1 L994.8,355.0 L1002.0,343.1 L1009.3,361.5 L1016.5,385.3 L1023.8,372.2 L1031.0,319.4 L1038.3,372.8 L1045.5,356.2 L1052.8,371.0 L1060.0,364.8 L1067.3,369.8 L1074.5,383.8 L1081.8,377.0 L1081.8,385.0 L1074.5,394.0 L1067.3,384.0 L1060.0,374.3 L1052.8,384.7 L1045.5,373.4 L1038.3,386.5 L1031.0,332.4 L1023.8,391.8 L1016.5,394.8 L1009.3,371.0 L1002.0,359.7 L994.8,366.3 L987.5,370.4 L980.3,344.9 L973.0,400.0 L965.8,399.5 L958.5,398.9 L951.3,364.5 L944.0,382.9 L936.8,362.7 L929.5,387.6 L922.3,428.0 L915.0,436.9 L907.8,399.5 L900.5,366.3 L893.3,378.7 L886.0,368.1 L878.8,359.7 L871.5,427.1 L864.3,401.9 L857.0,387.6 L849.8,407.8 L842.5,399.5 L835.3,365.7 L828.0,366.3 L820.8,394.8 L813.5,403.7 L806.3,410.2 L799.0,381.1 L791.8,401.4 L784.5,387.6 L777.3,373.4 L770.0,400.0 L762.8,411.4 L755.5,368.1 L748.3,388.8 L741.0,397.1 L733.8,377.6 L726.5,466.0 L719.3,401.9 L712.0,407.2 L704.8,410.8 L697.5,371.6 L690.3,397.1 L683.0,338.4 L675.8,374.6 L668.5,339.0 L661.3,403.7Z" fill="#f9d8a6"/>
<path d="M661.3,385.3 L668.5,304.5 L675.8,338.4 L683.0,313.4 L690.3,368.6 L697.5,336.0 L704.8,388.2 L712.0,380.5 L719.3,372.8 L726.5,462.7 L733.8,350.8 L741.0,371.0 L748.3,356.8 L755.5,345.5 L762.8,389.4 L770.0,381.1 L777.3,343.1 L784.5,355.6 L791.8,372.8 L799.0,348.2 L806.3,387.1 L813.5,385.9 L820.8,363.9 L828.0,331.2 L835.3,339.6 L842.5,366.3 L849.8,385.3 L857.0,359.1 L864.3,377.0 L871.5,398.3 L878.8,324.7 L886.0,338.4 L893.3,341.9 L900.5,338.4 L907.8,377.0 L915.0,413.2 L922.3,400.0 L929.5,346.7 L936.8,333.0 L944.0,358.0 L951.3,335.4 L958.5,372.2 L965.8,368.1 L973.0,377.0 L980.3,318.8 L987.5,348.5 L994.8,339.0 L1002.0,325.9 L1009.3,347.3 L1016.5,369.2 L1023.8,358.0 L1031.0,301.0 L1038.3,349.1 L1045.5,339.6 L1052.8,353.8 L1060.0,339.7 L1067.3,352.5 L1074.5,369.6 L1081.8,363.3 L1081.8,377.0 L1074.5,383.8 L1067.3,369.8 L1060.0,364.8 L1052.8,371.0 L1045.5,356.2 L1038.3,372.8 L1031.0,319.4 L1023.8,372.2 L1016.5,385.3 L1009.3,361.5 L1002.0,343.1 L994.8,355.0 L987.5,362.1 L980.3,330.1 L973.0,391.2 L965.8,391.8 L958.5,388.8 L951.3,348.5 L944.0,372.8 L936.8,350.8 L929.5,369.8 L922.3,416.7 L915.0,424.5 L907.8,390.0 L900.5,352.0 L893.3,365.1 L886.0,353.8 L878.8,352.6 L871.5,415.7 L864.3,394.8 L857.0,374.6 L849.8,398.3 L842.5,387.6 L835.3,355.6 L828.0,353.2 L820.8,379.3 L813.5,398.9 L806.3,402.5 L799.0,368.6 L791.8,393.0 L784.5,377.0 L777.3,363.3 L770.0,397.1 L762.8,404.3 L755.5,360.3 L748.3,368.1 L741.0,385.3 L733.8,366.3 L726.5,463.7 L719.3,388.8 L712.0,397.1 L704.8,403.1 L697.5,353.2 L690.3,384.1 L683.0,331.2 L675.8,360.3 L668.5,325.3 L661.3,397.1Z" fill="#9ac3ef"/>
<path d="M661.3,490.7 L668.5,480.9 L675.8,474.9 L683.0,482.6 L690.3,483.6 L697.5,484.8 L704.8,491.2 L712.0,482.4 L719.3,485.6 L726.5,490.4 L733.8,482.1 L741.0,483.8 L748.3,485.6 L755.5,483.2 L762.8,486.8 L770.0,485.3 L777.3,483.6 L784.5,482.4 L791.8,483.2 L799.0,486.8 L806.3,481.2 L813.5,485.3 L820.8,485.3 L828.0,476.7 L835.3,481.5 L842.5,482.6 L849.8,485.3 L857.0,485.6 L864.3,485.0 L871.5,486.8 L878.8,485.6 L886.0,483.2 L893.3,488.0 L900.5,486.8 L907.8,483.6 L915.0,488.3 L922.3,486.8 L929.5,484.1 L936.8,483.8 L944.0,477.3 L951.3,485.0 L958.5,482.9 L965.8,484.8 L973.0,488.0 L980.3,480.9 L987.5,481.2 L994.8,482.1 L1002.0,480.9 L1009.3,486.2 L1016.5,484.8 L1023.8,487.4 L1031.0,477.3 L1038.3,477.3 L1045.5,479.1 L1052.8,484.1 L1060.0,482.1 L1067.3,486.2 L1074.5,481.5 L1081.8,481.2" fill="none" stroke="#c650d8" stroke-width="1.6" stroke-linejoin="miter" stroke-miterlimit="10"/>
<path d="M661.3,483.8 L668.5,465.8 L675.8,467.2 L683.0,466.6 L690.3,475.5 L697.5,476.9 L704.8,487.4 L712.0,478.1 L719.3,479.7 L726.5,486.8 L733.8,475.5 L741.0,473.1 L748.3,481.2 L755.5,475.9 L762.8,480.0 L770.0,474.9 L777.3,477.9 L784.5,476.5 L791.8,475.5 L799.0,480.9 L806.3,477.7 L813.5,481.7 L820.8,475.5 L828.0,465.8 L835.3,467.2 L842.5,473.7 L849.8,480.3 L857.0,479.7 L864.3,480.0 L871.5,481.7 L878.8,477.3 L886.0,479.1 L893.3,474.9 L900.5,469.4 L907.8,476.7 L915.0,480.9 L922.3,481.7 L929.5,475.5 L936.8,475.5 L944.0,470.2 L951.3,479.7 L958.5,480.3 L965.8,477.3 L973.0,483.8 L980.3,473.1 L987.5,471.4 L994.8,470.8 L1002.0,473.7 L1009.3,475.5 L1016.5,476.1 L1023.8,479.7 L1031.0,467.8 L1038.3,467.2 L1045.5,470.8 L1052.8,471.4 L1060.0,474.3 L1067.3,472.2 L1074.5,471.3 L1081.8,472.9" fill="none" stroke="#8f5b3c" stroke-width="1.6" stroke-linejoin="miter" stroke-miterlimit="10"/>
<path d="M661.3,480.9 L668.5,446.1 L675.8,458.9 L683.0,453.2 L690.3,466.6 L697.5,467.0 L704.8,474.9 L712.0,473.7 L719.3,474.9 L726.5,484.4 L733.8,462.5 L741.0,468.4 L748.3,474.9 L755.5,460.7 L762.8,476.1 L770.0,473.7 L777.3,473.7 L784.5,466.6 L791.8,465.8 L799.0,472.6 L806.3,473.7 L813.5,480.9 L820.8,458.9 L828.0,453.0 L835.3,455.3 L842.5,470.2 L849.8,478.8 L857.0,473.1 L864.3,477.9 L871.5,474.3 L878.8,466.6 L886.0,473.7 L893.3,466.0 L900.5,455.9 L907.8,470.2 L915.0,479.1 L922.3,477.9 L929.5,469.0 L936.8,467.2 L944.0,458.9 L951.3,473.1 L958.5,477.7 L965.8,469.0 L973.0,479.7 L980.3,445.8 L987.5,468.4 L994.8,458.3 L1002.0,453.0 L1009.3,464.2 L1016.5,470.2 L1023.8,463.7 L1031.0,460.7 L1038.3,451.8 L1045.5,460.1 L1052.8,464.8 L1060.0,461.9 L1067.3,467.2 L1074.5,469.5 L1081.8,461.5" fill="none" stroke="#e6484a" stroke-width="1.6" stroke-linejoin="miter" stroke-miterlimit="10"/>
<path d="M661.3,472.2 L668.5,430.4 L675.8,445.2 L683.0,434.6 L690.3,455.1 L697.5,455.9 L704.8,460.7 L712.0,463.1 L719.3,463.4 L726.5,477.3 L733.8,446.8 L741.0,453.6 L748.3,464.2 L755.5,445.8 L762.8,463.7 L770.0,464.2 L777.3,455.3 L784.5,453.0 L791.8,450.6 L799.0,460.1 L806.3,461.3 L813.5,474.3 L820.8,446.4 L828.0,441.7 L835.3,441.1 L842.5,453.6 L849.8,461.9 L857.0,461.3 L864.3,464.2 L871.5,464.2 L878.8,457.1 L886.0,458.9 L893.3,447.6 L900.5,442.9 L907.8,458.9 L915.0,473.7 L922.3,469.6 L929.5,452.4 L936.8,453.6 L944.0,443.5 L951.3,454.1 L958.5,463.7 L965.8,458.9 L973.0,465.4 L980.3,428.6 L987.5,450.2 L994.8,449.4 L1002.0,438.1 L1009.3,453.9 L1016.5,455.3 L1023.8,455.9 L1031.0,444.6 L1038.3,438.1 L1045.5,448.2 L1052.8,449.4 L1060.0,448.2 L1067.3,461.9 L1074.5,444.4 L1081.8,449.0" fill="none" stroke="#5a60f0" stroke-width="1.6" stroke-linejoin="miter" stroke-miterlimit="10"/>
<path d="M661.3,464.2 L668.5,416.7 L675.8,437.5 L683.0,420.9 L690.3,442.3 L697.5,441.1 L704.8,454.4 L712.0,455.9 L719.3,453.6 L726.5,471.7 L733.8,439.3 L741.0,445.8 L748.3,450.8 L755.5,435.7 L762.8,452.4 L770.0,454.1 L777.3,446.4 L784.5,444.6 L791.8,439.9 L799.0,449.4 L806.3,454.1 L813.5,466.6 L820.8,436.9 L828.0,428.6 L835.3,434.0 L842.5,443.5 L849.8,451.2 L857.0,455.9 L864.3,456.5 L871.5,457.5 L878.8,445.8 L886.0,447.6 L893.3,433.4 L900.5,431.6 L907.8,450.6 L915.0,470.8 L922.3,463.7 L929.5,441.7 L936.8,444.1 L944.0,437.5 L951.3,444.6 L958.5,455.3 L965.8,446.4 L973.0,457.7 L980.3,416.7 L987.5,437.5 L994.8,440.5 L1002.0,426.8 L1009.3,438.1 L1016.5,449.4 L1023.8,447.6 L1031.0,430.4 L1038.3,432.2 L1045.5,435.2 L1052.8,439.3 L1060.0,437.5 L1067.3,453.6 L1074.5,436.4 L1081.8,439.8" fill="none" stroke="#3b9a45" stroke-width="1.6" stroke-linejoin="miter" stroke-miterlimit="10"/>
<path d="M661.3,449.4 L668.5,396.0 L675.8,422.7 L683.0,382.3 L690.3,427.4 L697.5,417.3 L704.8,445.8 L712.0,442.3 L719.3,440.5 L726.5,469.6 L733.8,416.7 L741.0,433.4 L748.3,428.0 L755.5,421.5 L762.8,439.9 L770.0,435.7 L777.3,434.6 L784.5,435.2 L791.8,431.0 L799.0,434.0 L806.3,444.6 L813.5,456.5 L820.8,422.7 L828.0,409.6 L835.3,416.7 L842.5,430.4 L849.8,438.1 L857.0,441.7 L864.3,436.9 L871.5,450.6 L878.8,417.3 L886.0,408.4 L893.3,419.1 L900.5,417.3 L907.8,439.9 L915.0,464.2 L922.3,450.6 L929.5,422.7 L936.8,429.8 L944.0,432.8 L951.3,431.0 L958.5,444.6 L965.8,436.3 L973.0,450.6 L980.3,403.7 L987.5,420.9 L994.8,426.8 L1002.0,402.5 L1009.3,419.1 L1016.5,435.7 L1023.8,437.5 L1031.0,409.0 L1038.3,419.7 L1045.5,417.3 L1052.8,420.9 L1060.0,415.0 L1067.3,444.2 L1074.5,429.6 L1081.8,422.7" fill="none" stroke="#f68b2a" stroke-width="1.6" stroke-linejoin="miter" stroke-miterlimit="10"/>
<path d="M661.3,424.5 L668.5,352.0 L675.8,395.4 L683.0,349.7 L690.3,403.7 L697.5,390.0 L704.8,419.7 L712.0,417.3 L719.3,416.7 L726.5,468.4 L733.8,386.5 L741.0,407.2 L748.3,400.0 L755.5,387.1 L762.8,421.4 L770.0,410.2 L777.3,399.5 L784.5,398.9 L791.8,412.0 L799.0,400.7 L806.3,414.4 L813.5,423.9 L820.8,398.3 L828.0,378.2 L835.3,371.0 L842.5,407.8 L849.8,413.8 L857.0,410.2 L864.3,412.6 L871.5,430.4 L878.8,387.6 L886.0,379.3 L893.3,382.3 L900.5,386.5 L907.8,412.8 L915.0,444.1 L922.3,434.6 L929.5,392.4 L936.8,397.1 L944.0,398.9 L951.3,394.2 L958.5,410.2 L965.8,410.2 L973.0,421.5 L980.3,373.4 L987.5,396.0 L994.8,396.0 L1002.0,366.9 L1009.3,390.6 L1016.5,401.9 L1023.8,400.7 L1031.0,377.6 L1038.3,394.8 L1045.5,382.9 L1052.8,392.4 L1060.0,393.2 L1067.3,402.1 L1074.5,399.9 L1081.8,394.1" fill="none" stroke="#2fb5ae" stroke-width="1.6" stroke-linejoin="miter" stroke-miterlimit="10"/>
<path d="M661.3,403.7 L668.5,339.0 L675.8,374.6 L683.0,338.4 L690.3,397.1 L697.5,371.6 L704.8,410.8 L712.0,407.2 L719.3,401.9 L726.5,466.0 L733.8,377.6 L741.0,397.1 L748.3,388.8 L755.5,368.1 L762.8,411.4 L770.0,400.0 L777.3,373.4 L784.5,387.6 L791.8,401.4 L799.0,381.1 L806.3,410.2 L813.5,403.7 L820.8,394.8 L828.0,366.3 L835.3,365.7 L842.5,399.5 L849.8,407.8 L857.0,387.6 L864.3,401.9 L871.5,427.1 L878.8,359.7 L886.0,368.1 L893.3,378.7 L900.5,366.3 L907.8,399.5 L915.0,436.9 L922.3,428.0 L929.5,387.6 L936.8,362.7 L944.0,382.9 L951.3,364.5 L958.5,398.9 L965.8,399.5 L973.0,400.0 L980.3,344.9 L987.5,370.4 L994.8,366.3 L1002.0,359.7 L1009.3,371.0 L1016.5,394.8 L1023.8,391.8 L1031.0,332.4 L1038.3,386.5 L1045.5,373.4 L1052.8,384.7 L1060.0,374.3 L1067.3,384.0 L1074.5,394.0 L1081.8,385.0" fill="none" stroke="#f0608e" stroke-width="1.6" stroke-linejoin="miter" stroke-miterlimit="10"/>
<path d="M661.3,397.1 L668.5,325.3 L675.8,360.3 L683.0,331.2 L690.3,384.1 L697.5,353.2 L704.8,403.1 L712.0,397.1 L719.3,388.8 L726.5,463.7 L733.8,366.3 L741.0,385.3 L748.3,368.1 L755.5,360.3 L762.8,404.3 L770.0,397.1 L777.3,363.3 L784.5,377.0 L791.8,393.0 L799.0,368.6 L806.3,402.5 L813.5,398.9 L820.8,379.3 L828.0,353.2 L835.3,355.6 L842.5,387.6 L849.8,398.3 L857.0,374.6 L864.3,394.8 L871.5,415.7 L878.8,352.6 L886.0,353.8 L893.3,365.1 L900.5,352.0 L907.8,390.0 L915.0,424.5 L922.3,416.7 L929.5,369.8 L936.8,350.8 L944.0,372.8 L951.3,348.5 L958.5,388.8 L965.8,391.8 L973.0,391.2 L980.3,330.1 L987.5,362.1 L994.8,355.0 L1002.0,343.1 L1009.3,361.5 L1016.5,385.3 L1023.8,372.2 L1031.0,319.4 L1038.3,372.8 L1045.5,356.2 L1052.8,371.0 L1060.0,364.8 L1067.3,369.8 L1074.5,383.8 L1081.8,377.0" fill="none" stroke="#f4b54a" stroke-width="1.6" stroke-linejoin="miter" stroke-miterlimit="10"/>
<path d="M661.3,385.3 L668.5,304.5 L675.8,338.4 L683.0,313.4 L690.3,368.6 L697.5,336.0 L704.8,388.2 L712.0,380.5 L719.3,372.8 L726.5,462.7 L733.8,350.8 L741.0,371.0 L748.3,356.8 L755.5,345.5 L762.8,389.4 L770.0,381.1 L777.3,343.1 L784.5,355.6 L791.8,372.8 L799.0,348.2 L806.3,387.1 L813.5,385.9 L820.8,363.9 L828.0,331.2 L835.3,339.6 L842.5,366.3 L849.8,385.3 L857.0,359.1 L864.3,377.0 L871.5,398.3 L878.8,324.7 L886.0,338.4 L893.3,341.9 L900.5,338.4 L907.8,377.0 L915.0,413.2 L922.3,400.0 L929.5,346.7 L936.8,333.0 L944.0,358.0 L951.3,335.4 L958.5,372.2 L965.8,368.1 L973.0,377.0 L980.3,318.8 L987.5,348.5 L994.8,339.0 L1002.0,325.9 L1009.3,347.3 L1016.5,369.2 L1023.8,358.0 L1031.0,301.0 L1038.3,349.1 L1045.5,339.6 L1052.8,353.8 L1060.0,339.7 L1067.3,352.5 L1074.5,369.6 L1081.8,363.3" fill="none" stroke="#3c8fe6" stroke-width="1.6" stroke-linejoin="miter" stroke-miterlimit="10"/></g></svg>
<div class="b" style="left:1107.8px;top:219.3px;width:19.5px;height:19.5px;background:#f1f3f5;border:1px solid #dee2e6;border-radius:4px;box-sizing:border-box;"></div>
<svg class="b" style="left:0;top:0" width="1600" height="900"><circle cx="1117.5" cy="224.5" r="1.1" fill="#3d434b"/><circle cx="1117.5" cy="229" r="1.1" fill="#3d434b"/><circle cx="1117.5" cy="233.5" r="1.1" fill="#3d434b"/></svg>
<div class="b" style="left:968.3px;top:243.4px;width:158.6px;height:200px;background:#fff;border:1px solid #e9ecef;border-radius:6px;box-sizing:border-box;box-shadow:0 2px 10px rgba(0,0,0,0.08), 6px 4px 10px rgba(0,0,0,0.05);overflow:hidden;"></div>
<div class="b" style="left:968.8px;top:350px;width:157.6px;height:94px;background:#f8f9fa;"></div>
<div class="b" style="left:969px;top:383.5px;width:157px;height:1px;background:#e9ecef;"></div>
<div class="b" style="left:974.5px;top:316.2px;width:146px;height:1px;background:#e6e9ed;"></div>
<div class="b" style="left:972.3px;top:248.3px;width:150px;height:24.7px;background:#f2f3f5;border:3px solid #eb6f9c;border-radius:7px;box-sizing:border-box;"></div>
<div class="t" style="left:981px;top:255.95px;font-size:10.3px;color:#1f2328;font-weight:normal;-webkit-text-stroke:0.25px #1f2328;">New analysis from here</div>
<div class="t" style="left:981px;top:275.65px;font-size:10.3px;color:#1f2328;font-weight:normal;-webkit-text-stroke:0.25px #1f2328;">Download CSV</div>
<div class="t" style="left:981px;top:295.45px;font-size:10.3px;color:#1f2328;font-weight:normal;-webkit-text-stroke:0.25px #1f2328;">Download Excel</div>
<div class="t" style="left:981px;top:329.85px;font-size:10.3px;color:#1f2328;font-weight:normal;-webkit-text-stroke:0.25px #1f2328;">View in workbook</div>
<div class="t" style="left:981px;top:363.50px;font-size:10.6px;color:#7b838d;font-weight:normal;-webkit-text-stroke:0.15px #7b838d;">5 filters applied</div>
<div class="t" style="left:997.5px;top:396.30px;font-size:10.6px;color:#5c636c;font-weight:normal;-webkit-text-stroke:0.15px #5c636c;">Updated 9:20:24 AM</div>
<svg class="b" style="left:0;top:0" width="1600" height="900"><path d="M1108.5,364.5 L1111.5,368 L1108.5,371.5" fill="none" stroke="#7b838d" stroke-width="1.1"/><path d="M988.3,397.8 A3.6,3.6 0 1 0 989.2,401.5" fill="none" stroke="#5c636c" stroke-width="1.2"/><path d="M987,396.5 L989,398.5 L986.5,399.5" fill="none" stroke="#5c636c" stroke-width="1.1"/></svg>
<div class="b" style="left:639.5px;top:405.8px;width:870.3px;height:477.8px;background:linear-gradient(180deg,#f8f8f9 0%,#f8f6f7 45%,#f7eef0 100%);"></div>
<div class="b" style="left:639.5px;top:405.8px;width:870.3px;height:477.8px;background:radial-gradient(ellipse 60% 70% at 100% 100%,rgba(238,222,242,0.75) 0%,rgba(238,222,242,0) 100%);"></div>
<svg class="b" style="left:0;top:0" width="1600" height="900"><circle cx="651" cy="417.3" r="3.7" fill="none" stroke="#1b1b1f" stroke-width="1.5"/><rect x="647" y="423" width="8" height="1.3" rx="0.6" fill="#f25ca2"/><circle cx="657.5" cy="446.7" r="2.3" fill="#f23d7d"/><path d="M649,444 L649,449.5 M648,445 L649,444 L650,445 M653,444 L653,449.5 M652,448.5 L653,449.5 L654,448.5" stroke="#6b7280" stroke-width="0.9" fill="none"/><line x1="647" y1="460.3" x2="655.5" y2="460.3" stroke="#dfe3e8" stroke-width="0.8"/></svg>
<div class="t" style="left:669.8px;top:415.05px;font-size:7.5px;color:#4a5058;font-weight:normal;">File</div>
<div class="t" style="left:692px;top:415.05px;font-size:7.5px;color:#4a5058;font-weight:normal;">View</div>
<div class="t" style="left:718.8px;top:415.05px;font-size:7.5px;color:#4a5058;font-weight:normal;">Tab</div>
<div class="t" style="left:741px;top:415.05px;font-size:7.5px;color:#4a5058;font-weight:normal;">Model</div>
<div class="t" style="left:771.6px;top:415.05px;font-size:7.5px;color:#4a5058;font-weight:normal;">Help</div>
<div class="b" style="left:1394.5px;top:408.4px;width:61.5px;height:18.1px;background:#fff;border:1px solid #dee2e6;border-radius:4px;box-sizing:border-box;"></div>
<svg class="b" style="left:0;top:0" width="1600" height="900"><path d="M1406,414.5 L1406,421 M1402.8,417.8 L1409.2,417.8" stroke="#2e343b" stroke-width="1.1"/><circle cx="1470.2" cy="417.8" r="5.3" fill="none" stroke="#4a5058" stroke-width="1"/><circle cx="1491.2" cy="417.8" r="7.8" fill="#4b46d3"/></svg>
<div class="t" style="left:1415px;top:415.20px;font-size:7.2px;color:#2e343b;font-weight:normal;">Dashboard</div>
<div class="t" style="left:1270.2px;width:400px;text-align:center;top:415.30px;font-size:7px;color:#4a5058;font-weight:bold;">?</div>
<div class="t" style="left:1291.2px;width:400px;text-align:center;top:414.80px;font-size:8px;color:#ffffff;font-weight:normal;">A</div>
<div class="b" style="left:665.3px;top:432.8px;width:833.7px;height:440.5px;background:#fff;border:1px solid #ebedf0;border-radius:7px;box-sizing:border-box;overflow:hidden;"></div>
<div class="b" style="left:843.3px;top:433.3px;width:1px;height:418.5px;background:#f0f2f5;"></div>
<div class="t" style="left:672.3px;top:445.75px;font-size:8.1px;color:#2e343b;font-weight:normal;-webkit-text-stroke:0.25px #2e343b;">Order Transactions</div>
<svg class="b" style="left:0;top:0" width="1600" height="900"><path d="M748,447.8 L752,447.8 L750,450.3 Z" fill="#4a5058"/><path d="M828.9,446.1 L830.5,447.7 L832.1,446.1 M828.9,451.7 L830.5,450.1 L832.1,451.7" stroke="#4a5058" stroke-width="1" fill="none"/></svg>
<div class="b" style="left:665.8px;top:464px;width:177.5px;height:0.8px;background:#eff1f4;"></div>
<div class="b" style="left:672.7px;top:472px;width:164.3px;height:17.7px;background:#fff;border:1px solid #eaedf1;border-radius:4px;box-sizing:border-box;"></div>
<svg class="b" style="left:0;top:0" width="1600" height="900"><circle cx="681" cy="480.5" r="3" fill="none" stroke="#9aa1aa" stroke-width="0.9"/><line x1="683.2" y1="482.7" x2="684.8" y2="484.3" stroke="#9aa1aa" stroke-width="0.9"/><path d="M824.2,477.8 L824.2,484.6 M826.6,477.8 L826.6,484.6 M829,477.8 L829,484.6" stroke="#5a616b" stroke-width="0.8"/><path d="M823.1,480.6 L825.3,480.6 M825.5,483 L827.7,483 M827.9,479.2 L830.1,479.2" stroke="#4a5058" stroke-width="1.2"/></svg>
<div class="t" style="left:690.5px;top:477.90px;font-size:7.8px;color:#a0a7b0;font-weight:normal;">Search</div>
<div class="t" style="left:679px;top:502.45px;font-size:6.9px;color:#1f2328;font-weight:bold;">User Order Facts</div>
<div class="t" style="left:679px;top:518.15px;font-size:6.9px;color:#1f2328;font-weight:bold;">Distribution Centers</div>
<div class="t" style="left:679px;top:533.95px;font-size:6.9px;color:#1f2328;font-weight:bold;">Inventory Items</div>
<svg class="b" style="left:0;top:0" width="1600" height="900"><path d="M672.8,503.8 L674.6,505.1 L672.8,506.4 Z M672.8,519.5 L674.6,520.8 L672.8,522.1 Z M672.2,535.8 L674.8,535.8 L673.5,537.6 Z M672.2,745.6 L674.8,745.6 L673.5,747.4 Z" fill="#4a5058"/><path d="M676.5,565.8 L678.3,567.5 L676.5,569.2 M676.5,711.2 L678.3,712.9 L676.5,714.6 M676,762.2 L677.7,764 L679.4,762.2" stroke="#4a5058" stroke-width="0.9" fill="none"/></svg>
<div class="b" style="left:804.5px;top:532.8px;width:11.5px;height:7.6px;background:#eef0f3;border-radius:4px;"></div>
<div class="t" style="left:610.3px;width:400px;text-align:center;top:534.15px;font-size:6.5px;color:#4a5058;font-weight:normal;">1</div>
<div class="b" style="left:681.2px;top:604.3px;width:151.4px;height:13.2px;background:#f1f2f5;border-radius:3px;"></div>
<div class="t" style="left:696.7px;top:549.40px;font-size:7.2px;color:#2e343b;font-weight:normal;">Cost</div>
<div class="t" style="left:686.6px;top:549.75px;font-size:6.5px;color:#c0c5cc;font-weight:normal;">#</div>
<div class="t" style="left:696.7px;top:563.90px;font-size:7.2px;color:#2e343b;font-weight:normal;">Created At</div>
<div class="b" style="left:686.3px;top:564.5px;width:5px;height:5.5px;border:0.8px solid #c5cad1;border-top-width:1.5px;border-radius:1px;box-sizing:border-box;"></div>
<div class="t" style="left:696.7px;top:578.60px;font-size:7.2px;color:#2e343b;font-weight:normal;">ID</div>
<div class="t" style="left:686.6px;top:578.95px;font-size:6.5px;color:#c0c5cc;font-weight:normal;">#</div>
<div class="t" style="left:696.7px;top:593.10px;font-size:7.2px;color:#2e343b;font-weight:normal;">Product Brand</div>
<div class="t" style="left:686.6px;top:593.45px;font-size:6.5px;color:#c0c5cc;font-weight:normal;">A</div>
<div class="t" style="left:696.7px;top:607.50px;font-size:7.2px;color:#2e343b;font-weight:bold;">Product Category</div>
<div class="t" style="left:686.6px;top:607.85px;font-size:6.5px;color:#c0c5cc;font-weight:normal;">A</div>
<div class="t" style="left:696.7px;top:622.10px;font-size:7.2px;color:#2e343b;font-weight:normal;">Product Department</div>
<div class="t" style="left:686.6px;top:622.45px;font-size:6.5px;color:#c0c5cc;font-weight:normal;">A</div>
<div class="t" style="left:696.7px;top:636.80px;font-size:7.2px;color:#2e343b;font-weight:normal;">Product Distribution Center ID</div>
<div class="t" style="left:686.6px;top:637.15px;font-size:6.5px;color:#c0c5cc;font-weight:normal;">#</div>
<div class="t" style="left:696.7px;top:651.30px;font-size:7.2px;color:#2e343b;font-weight:normal;">Product ID</div>
<div class="t" style="left:686.6px;top:651.65px;font-size:6.5px;color:#c0c5cc;font-weight:normal;">#</div>
<div class="t" style="left:696.7px;top:665.60px;font-size:7.2px;color:#2e343b;font-weight:normal;">Product Name</div>
<div class="t" style="left:686.6px;top:665.95px;font-size:6.5px;color:#c0c5cc;font-weight:normal;">A</div>
<div class="t" style="left:696.7px;top:680.00px;font-size:7.2px;color:#2e343b;font-weight:normal;">Product Retail Price</div>
<div class="t" style="left:686.6px;top:680.35px;font-size:6.5px;color:#c0c5cc;font-weight:normal;">#</div>
<div class="t" style="left:696.7px;top:694.40px;font-size:7.2px;color:#2e343b;font-weight:normal;">Product Sku</div>
<div class="t" style="left:686.6px;top:694.75px;font-size:6.5px;color:#c0c5cc;font-weight:normal;">A</div>
<div class="t" style="left:696.7px;top:709.30px;font-size:7.2px;color:#2e343b;font-weight:normal;">Sold At</div>
<div class="b" style="left:686.3px;top:709.9px;width:5px;height:5.5px;border:0.8px solid #c5cad1;border-top-width:1.5px;border-radius:1px;box-sizing:border-box;"></div>
<div class="t" style="left:696.7px;top:724.00px;font-size:7.2px;color:#2f9e63;font-weight:normal;">Inventory Items Count</div>
<div class="t" style="left:686.6px;top:724.35px;font-size:6.5px;color:#7cc79f;font-weight:normal;">#</div>
<div class="t" style="left:679px;top:743.75px;font-size:6.9px;color:#1f2328;font-weight:bold;">Order Items</div>
<div class="b" style="left:804.5px;top:742.6px;width:11.5px;height:7.6px;background:#eef0f3;border-radius:4px;"></div>
<div class="t" style="left:610.3px;width:400px;text-align:center;top:743.95px;font-size:6.5px;color:#4a5058;font-weight:normal;">5</div>
<div class="t" style="left:696.7px;top:759.70px;font-size:7.2px;color:#2e343b;font-weight:normal;">Created At</div>
<div class="b" style="left:686.3px;top:760.3px;width:5px;height:5.5px;border:0.8px solid #c5cad1;border-top-width:1.5px;border-radius:1px;box-sizing:border-box;"></div>
<div class="b" style="left:681px;top:771px;width:151.7px;height:13px;background:#f1f2f5;border-radius:3px;"></div>
<div class="b" style="left:681px;top:785.5px;width:151.7px;height:13px;background:#f1f2f5;border-radius:3px;"></div>
<div class="t" style="left:703.8px;top:774.20px;font-size:7.2px;color:#2e343b;font-weight:normal;-webkit-text-stroke:0.2px #2e343b;">Raw</div>
<div class="b" style="left:692.8px;top:774.8px;width:5px;height:5.5px;border:0.8px solid #b9bfc7;border-top-width:1.5px;border-radius:1px;box-sizing:border-box;"></div>
<div class="t" style="left:703.8px;top:788.80px;font-size:7.2px;color:#2e343b;font-weight:normal;-webkit-text-stroke:0.2px #2e343b;">Date</div>
<div class="b" style="left:692.8px;top:789.4px;width:5px;height:5.5px;border:0.8px solid #b9bfc7;border-top-width:1.5px;border-radius:1px;box-sizing:border-box;"></div>
<div class="t" style="left:703.8px;top:803.30px;font-size:7.2px;color:#2e343b;font-weight:normal;">Week</div>
<div class="b" style="left:692.8px;top:803.9px;width:5px;height:5.5px;border:0.8px solid #b9bfc7;border-top-width:1.5px;border-radius:1px;box-sizing:border-box;"></div>
<div class="t" style="left:703.8px;top:817.70px;font-size:7.2px;color:#2e343b;font-weight:normal;">Month</div>
<div class="b" style="left:692.8px;top:818.3px;width:5px;height:5.5px;border:0.8px solid #b9bfc7;border-top-width:1.5px;border-radius:1px;box-sizing:border-box;"></div>
<div class="t" style="left:703.8px;top:831.90px;font-size:7.2px;color:#2e343b;font-weight:normal;">Quarter</div>
<div class="b" style="left:692.8px;top:832.5px;width:5px;height:5.5px;border:0.8px solid #b9bfc7;border-top-width:1.5px;border-radius:1px;box-sizing:border-box;"></div>
<svg class="b" style="left:0;top:0" width="1600" height="900"><path d="M813.5,774.8 L819,774.8 L817,778 L817,781 L815.5,780 L815.5,778 Z" fill="none" stroke="#4a5058" stroke-width="0.8"/></svg>
<div class="b" style="left:665.8px;top:834px;width:177.5px;height:18px;background:#fff;border-top:0.8px solid #eceef1;"></div>
<div class="t" style="left:685.6px;top:840.20px;font-size:7.2px;color:#3d434b;font-weight:normal;">Add Field</div>
<svg class="b" style="left:0;top:0" width="1600" height="900"><path d="M677.5,840.3 L677.5,845.5 M674.9,842.9 L680.1,842.9" stroke="#4a5058" stroke-width="0.9"/><path d="M839,849.5 L842.5,846 M840.8,849.5 L842.5,847.8" stroke="#9aa1aa" stroke-width="0.7"/></svg>
<div class="b" style="left:665.3px;top:851.8px;width:833.7px;height:21.5px;background:#f4f5f7;border-top:0.8px solid #eceef1;box-sizing:border-box;border-radius:0 0 7px 7px;box-shadow:0 3px 6px rgba(120,60,90,0.06);"></div>
<div class="b" style="left:692.7px;top:852.2px;width:101.7px;height:21.1px;background:#fff;"></div>
<div class="b" style="left:692.7px;top:872.1px;width:101.7px;height:1.2px;background:linear-gradient(90deg,#c4a5f7,#f27aa2);"></div>
<svg class="b" style="left:0;top:0" width="1600" height="900"><path d="M675.6,860.5 L682.2,860.5 M675.6,862.9 L682.2,862.9 M675.6,865.3 L682.2,865.3" stroke="#4a5058" stroke-width="0.9"/><path d="M779.5,862 L782.5,862 L781,863.8 Z" fill="#4a5058"/><path d="M806,860 L806,866 M803,863 L809,863" stroke="#6b7280" stroke-width="0.9"/></svg>
<div class="t" style="left:699.6px;top:860.30px;font-size:7.0px;color:#1f2328;font-weight:bold;">Category Performance</div>
<svg class="b" style="left:0;top:0" width="1600" height="900"><rect x="854" y="445.3" width="7" height="7.4" rx="1" fill="none" stroke="#6b7280" stroke-width="0.9"/><line x1="856.8" y1="445.3" x2="856.8" y2="452.7" stroke="#6b7280" stroke-width="0.8"/></svg>
<div class="b" style="left:868.9px;top:440px;width:53.8px;height:17.8px;background:#fff;border:1px solid #e6e9ed;border-radius:4px;box-sizing:border-box;"></div>
<div class="b" style="left:895.6px;top:440.5px;width:26.6px;height:16.8px;background:#edf2fe;border-radius:0 4px 4px 0;"></div>
<div class="t" style="left:874px;top:446.20px;font-size:7.2px;color:#4a5058;font-weight:normal;">Table</div>
<div class="t" style="left:900.6px;top:446.20px;font-size:7.2px;color:#3b5bdb;font-weight:normal;">Chart</div>
<svg class="b" style="left:0;top:0" width="1600" height="900"><path d="M933,446 L940,446 M933,449 L940,449 M933,452 L940,452" stroke="#4a5058" stroke-width="0.8"/><circle cx="935.5" cy="446" r="1" fill="#fff" stroke="#4a5058" stroke-width="0.7"/><circle cx="938" cy="452" r="1" fill="#fff" stroke="#4a5058" stroke-width="0.7"/></svg>
<div class="t" style="left:945.6px;top:446.20px;font-size:7.2px;color:#4a5058;font-weight:normal;">Options</div>
<div class="b" style="left:1430.2px;top:440px;width:32.8px;height:17.4px;background:#fff;border:1px solid #e3e6ea;border-radius:4px;box-sizing:border-box;"></div>
<div class="b" style="left:1449.6px;top:440px;width:0.8px;height:17.4px;background:#e3e6ea;"></div>
<div class="t" style="left:1434.5px;top:446.20px;font-size:7.2px;color:#3d434b;font-weight:normal;">SQL</div>
<div class="b" style="left:1468px;top:440px;width:24px;height:17.4px;background:#fff;border:1px solid #e3e6ea;border-radius:9px;box-sizing:border-box;"></div>
<svg class="b" style="left:0;top:0" width="1600" height="900"><path d="M1228.7,445.2 L1232.3,451.6 L1225.1,451.6 Z" fill="none" stroke="#f5b83d" stroke-width="1"/><path d="M1373.2,445 L1373.2,450 M1371.3,448.2 L1373.2,450 L1375.1,448.2 M1369.5,450.5 L1369.5,452.5 L1377,452.5 L1377,450.5" stroke="#4a5058" stroke-width="0.9" fill="none"/><path d="M1415.5,448 L1419,448 L1417.25,450 Z" fill="#3d434b"/><path d="M1454.5,448 L1458,448 L1456.25,450 Z" fill="#3d434b"/><path d="M1477.5,445.7 L1482.3,449 L1477.5,452.3 Z" fill="none" stroke="#9aa1aa" stroke-width="0.9" stroke-linejoin="round"/></svg>
<div class="t" style="left:1235.2px;top:446.20px;font-size:7.2px;color:#6b7280;font-weight:normal;">10 rows, 59 pivot columns, from cache</div>
<div class="t" style="left:1388.6px;top:446.20px;font-size:7.2px;color:#3d434b;font-weight:normal;">Limits</div>
<div class="b" style="left:843.8px;top:464.2px;width:655px;height:0.8px;background:#eceef1;"></div>
<div class="b" style="left:851.1px;top:471.2px;width:641px;height:18.8px;border-radius:10px;background:linear-gradient(90deg,#fbe9dc,#fad3de 60%,#e4dcf8);"></div>
<div class="b" style="left:852.1px;top:472.2px;width:639px;height:16.8px;border-radius:9px;background:#fff;"></div>
<svg class="b" style="left:0;top:0" width="1600" height="900"><path d="M861.5,478 L862.3,480.3 L864.6,481 L862.3,481.8 L861.5,484 L860.7,481.8 L858.4,481 L860.7,480.3 Z" fill="#f59e62"/><circle cx="865" cy="477.8" r="0.8" fill="#f59e62"/><circle cx="865" cy="484" r="0.7" fill="#f59e62"/><line x1="873.8" y1="476.5" x2="873.8" y2="485.5" stroke="#4a5058" stroke-width="0.7"/><path d="M1476.5,481 L1483,481 M1480.5,478.5 L1483,481 L1480.5,483.5" stroke="#6b7280" stroke-width="0.9" fill="none"/></svg>
<div class="t" style="left:874.5px;top:478.00px;font-size:8.0px;color:#8f96a0;font-weight:normal;">Ask a question of your data</div>
<div class="t" style="left:853.3px;top:499.40px;font-size:6px;color:#9aa1aa;font-weight:normal;">Users</div>
<div class="t" style="left:853.3px;top:507.40px;font-size:7px;color:#2e343b;font-weight:bold;">ID</div>
<div class="b" style="left:853.3px;top:516.5px;width:133px;height:17px;background:#fff;border:1px solid #e9ecef;border-radius:3px;box-sizing:border-box;"></div>
<div class="t" style="left:860.3px;top:522.30px;font-size:7px;color:#2e343b;font-weight:normal;">= any value</div>
<div class="t" style="left:995.6px;top:499.40px;font-size:6px;color:#9aa1aa;font-weight:normal;">Users</div>
<div class="t" style="left:995.6px;top:507.40px;font-size:7px;color:#2e343b;font-weight:bold;">State</div>
<div class="b" style="left:995.6px;top:516.5px;width:133px;height:17px;background:#fff;border:1px solid #e9ecef;border-radius:3px;box-sizing:border-box;"></div>
<div class="t" style="left:1002.6px;top:522.30px;font-size:7px;color:#2e343b;font-weight:normal;">is: any value</div>
<div class="t" style="left:1137.5px;top:499.40px;font-size:6px;color:#9aa1aa;font-weight:normal;">Users</div>
<div class="t" style="left:1137.5px;top:507.40px;font-size:7px;color:#2e343b;font-weight:bold;">Gender</div>
<div class="b" style="left:1137.5px;top:516.5px;width:133px;height:17px;background:#fff;border:1px solid #e9ecef;border-radius:3px;box-sizing:border-box;"></div>
<div class="t" style="left:1144.5px;top:522.30px;font-size:7px;color:#2e343b;font-weight:normal;">is: any value</div>
<div class="t" style="left:1279.6px;top:499.40px;font-size:6px;color:#9aa1aa;font-weight:normal;">Users</div>
<div class="t" style="left:1279.6px;top:507.40px;font-size:7px;color:#2e343b;font-weight:bold;">Country</div>
<div class="b" style="left:1279.6px;top:516.5px;width:133px;height:17px;background:#fff;border:1px solid #e9ecef;border-radius:3px;box-sizing:border-box;"></div>
<div class="t" style="left:1286.6px;top:522.30px;font-size:7px;color:#2e343b;font-weight:normal;">is: any value</div>
<div class="b" style="left:1421.4px;top:516.5px;width:43.2px;height:17px;background:#fff;border:1px solid #e9ecef;border-radius:3px;box-sizing:border-box;"></div>
<svg class="b" style="left:0;top:0" width="1600" height="900"><path d="M1432.2,521.5 L1438.2,521.5 L1436,525 L1436,528.5 L1434.4,527.5 L1434.4,525 Z" fill="none" stroke="#6b7280" stroke-width="0.8"/></svg>
<div class="t" style="left:1444.5px;top:522.30px;font-size:7px;color:#6b7280;font-weight:normal;">+ 3</div>
<div class="b" style="left:843.8px;top:541.3px;width:655px;height:0.8px;background:#eceef1;"></div>
<div class="t" style="left:854.4px;top:552.95px;font-size:6.9px;color:#6b7280;font-weight:normal;-webkit-text-stroke:0.15px #6b7280;">Total Sale Price</div>
<div class="t" style="right:708.7px;top:808.75px;font-size:6.9px;color:#3d434b;font-weight:normal;-webkit-text-stroke:0.2px #3d434b;">$0.00</div>
<div class="t" style="right:708.7px;top:791.42px;font-size:6.9px;color:#3d434b;font-weight:normal;-webkit-text-stroke:0.2px #3d434b;">$1,000.00</div>
<div class="t" style="right:708.7px;top:774.09px;font-size:6.9px;color:#3d434b;font-weight:normal;-webkit-text-stroke:0.2px #3d434b;">$2,000.00</div>
<div class="t" style="right:708.7px;top:756.76px;font-size:6.9px;color:#3d434b;font-weight:normal;-webkit-text-stroke:0.2px #3d434b;">$3,000.00</div>
<div class="t" style="right:708.7px;top:739.43px;font-size:6.9px;color:#3d434b;font-weight:normal;-webkit-text-stroke:0.2px #3d434b;">$4,000.00</div>
<div class="t" style="right:708.7px;top:722.10px;font-size:6.9px;color:#3d434b;font-weight:normal;-webkit-text-stroke:0.2px #3d434b;">$5,000.00</div>
<div class="t" style="right:708.7px;top:704.77px;font-size:6.9px;color:#3d434b;font-weight:normal;-webkit-text-stroke:0.2px #3d434b;">$6,000.00</div>
<div class="t" style="right:708.7px;top:687.44px;font-size:6.9px;color:#3d434b;font-weight:normal;-webkit-text-stroke:0.2px #3d434b;">$7,000.00</div>
<div class="t" style="right:708.7px;top:670.11px;font-size:6.9px;color:#3d434b;font-weight:normal;-webkit-text-stroke:0.2px #3d434b;">$8,000.00</div>
<div class="t" style="right:708.7px;top:652.78px;font-size:6.9px;color:#3d434b;font-weight:normal;-webkit-text-stroke:0.2px #3d434b;">$9,000.00</div>
<div class="t" style="right:708.7px;top:635.45px;font-size:6.9px;color:#3d434b;font-weight:normal;-webkit-text-stroke:0.2px #3d434b;">$10,000.00</div>
<div class="t" style="right:708.7px;top:618.12px;font-size:6.9px;color:#3d434b;font-weight:normal;-webkit-text-stroke:0.2px #3d434b;">$11,000.00</div>
<div class="t" style="right:708.7px;top:600.79px;font-size:6.9px;color:#3d434b;font-weight:normal;-webkit-text-stroke:0.2px #3d434b;">$12,000.00</div>
<div class="t" style="right:708.7px;top:583.46px;font-size:6.9px;color:#3d434b;font-weight:normal;-webkit-text-stroke:0.2px #3d434b;">$13,000.00</div>
<div class="t" style="right:708.7px;top:566.13px;font-size:6.9px;color:#3d434b;font-weight:normal;-webkit-text-stroke:0.2px #3d434b;">$14,000.00</div>
<svg class="b" style="left:0;top:0" width="1600" height="900"><line x1="893" y1="812.2" x2="1481" y2="812.2" stroke="#f0f3f6" stroke-width="0.8"/><line x1="893" y1="794.9" x2="1481" y2="794.9" stroke="#f0f3f6" stroke-width="0.8"/><line x1="893" y1="777.5" x2="1481" y2="777.5" stroke="#f0f3f6" stroke-width="0.8"/><line x1="893" y1="760.2" x2="1481" y2="760.2" stroke="#f0f3f6" stroke-width="0.8"/><line x1="893" y1="742.9" x2="1481" y2="742.9" stroke="#f0f3f6" stroke-width="0.8"/><line x1="893" y1="725.6" x2="1481" y2="725.6" stroke="#f0f3f6" stroke-width="0.8"/><line x1="893" y1="708.2" x2="1481" y2="708.2" stroke="#f0f3f6" stroke-width="0.8"/><line x1="893" y1="690.9" x2="1481" y2="690.9" stroke="#f0f3f6" stroke-width="0.8"/><line x1="893" y1="673.6" x2="1481" y2="673.6" stroke="#f0f3f6" stroke-width="0.8"/><line x1="893" y1="656.2" x2="1481" y2="656.2" stroke="#f0f3f6" stroke-width="0.8"/><line x1="893" y1="638.9" x2="1481" y2="638.9" stroke="#f0f3f6" stroke-width="0.8"/><line x1="893" y1="621.6" x2="1481" y2="621.6" stroke="#f0f3f6" stroke-width="0.8"/><line x1="893" y1="604.2" x2="1481" y2="604.2" stroke="#f0f3f6" stroke-width="0.8"/><line x1="893" y1="586.9" x2="1481" y2="586.9" stroke="#f0f3f6" stroke-width="0.8"/><line x1="893" y1="569.6" x2="1481" y2="569.6" stroke="#f0f3f6" stroke-width="0.8"/><line x1="906.1" y1="568.5" x2="906.1" y2="816" stroke="#f0f3f6" stroke-width="0.8"/><line x1="926.3" y1="568.5" x2="926.3" y2="816" stroke="#f0f3f6" stroke-width="0.8"/><line x1="946.4" y1="568.5" x2="946.4" y2="816" stroke="#f0f3f6" stroke-width="0.8"/><line x1="966.6" y1="568.5" x2="966.6" y2="816" stroke="#f0f3f6" stroke-width="0.8"/><line x1="986.8" y1="568.5" x2="986.8" y2="816" stroke="#f0f3f6" stroke-width="0.8"/><line x1="1006.9" y1="568.5" x2="1006.9" y2="816" stroke="#f0f3f6" stroke-width="0.8"/><line x1="1027.1" y1="568.5" x2="1027.1" y2="816" stroke="#f0f3f6" stroke-width="0.8"/><line x1="1047.3" y1="568.5" x2="1047.3" y2="816" stroke="#f0f3f6" stroke-width="0.8"/><line x1="1067.5" y1="568.5" x2="1067.5" y2="816" stroke="#f0f3f6" stroke-width="0.8"/><line x1="1087.6" y1="568.5" x2="1087.6" y2="816" stroke="#f0f3f6" stroke-width="0.8"/><line x1="1107.8" y1="568.5" x2="1107.8" y2="816" stroke="#f0f3f6" stroke-width="0.8"/><line x1="1128.0" y1="568.5" x2="1128.0" y2="816" stroke="#f0f3f6" stroke-width="0.8"/><line x1="1148.2" y1="568.5" x2="1148.2" y2="816" stroke="#f0f3f6" stroke-width="0.8"/><line x1="1168.3" y1="568.5" x2="1168.3" y2="816" stroke="#f0f3f6" stroke-width="0.8"/><line x1="1188.5" y1="568.5" x2="1188.5" y2="816" stroke="#f0f3f6" stroke-width="0.8"/><line x1="1208.7" y1="568.5" x2="1208.7" y2="816" stroke="#f0f3f6" stroke-width="0.8"/><line x1="1228.8" y1="568.5" x2="1228.8" y2="816" stroke="#f0f3f6" stroke-width="0.8"/><line x1="1249.0" y1="568.5" x2="1249.0" y2="816" stroke="#f0f3f6" stroke-width="0.8"/><line x1="1269.2" y1="568.5" x2="1269.2" y2="816" stroke="#f0f3f6" stroke-width="0.8"/><line x1="1289.4" y1="568.5" x2="1289.4" y2="816" stroke="#f0f3f6" stroke-width="0.8"/><line x1="1309.5" y1="568.5" x2="1309.5" y2="816" stroke="#f0f3f6" stroke-width="0.8"/><line x1="1329.7" y1="568.5" x2="1329.7" y2="816" stroke="#f0f3f6" stroke-width="0.8"/><line x1="1349.9" y1="568.5" x2="1349.9" y2="816" stroke="#f0f3f6" stroke-width="0.8"/><line x1="1370.0" y1="568.5" x2="1370.0" y2="816" stroke="#f0f3f6" stroke-width="0.8"/><line x1="1390.2" y1="568.5" x2="1390.2" y2="816" stroke="#f0f3f6" stroke-width="0.8"/><line x1="1410.4" y1="568.5" x2="1410.4" y2="816" stroke="#f0f3f6" stroke-width="0.8"/><line x1="1430.6" y1="568.5" x2="1430.6" y2="816" stroke="#f0f3f6" stroke-width="0.8"/><line x1="1450.7" y1="568.5" x2="1450.7" y2="816" stroke="#f0f3f6" stroke-width="0.8"/><line x1="1470.9" y1="568.5" x2="1470.9" y2="816" stroke="#f0f3f6" stroke-width="0.8"/><line x1="896" y1="568.5" x2="896" y2="812.2" stroke="#e3e6ec" stroke-width="0.8"/><path d="M896.0,804.7 L906.1,792.7 L916.2,785.5 L926.3,794.9 L936.3,796.0 L946.4,797.5 L956.5,805.3 L966.6,794.6 L976.7,798.5 L986.8,804.3 L996.9,794.1 L1006.9,796.3 L1017.0,798.5 L1027.1,795.6 L1037.2,799.9 L1047.3,798.0 L1057.4,796.0 L1067.5,794.6 L1077.5,795.6 L1087.6,799.9 L1097.7,793.1 L1107.8,798.0 L1117.9,798.0 L1128.0,787.6 L1138.1,793.4 L1148.2,794.9 L1158.2,798.0 L1168.3,798.5 L1178.4,797.8 L1188.5,799.9 L1198.6,798.5 L1208.7,795.6 L1218.8,801.4 L1228.8,799.9 L1238.9,796.0 L1249.0,801.8 L1259.1,799.9 L1269.2,796.6 L1279.3,796.3 L1289.4,788.4 L1299.4,797.8 L1309.5,795.2 L1319.6,797.5 L1329.7,801.4 L1339.8,792.7 L1349.9,793.1 L1360.0,794.1 L1370.0,792.7 L1380.1,799.2 L1390.2,797.5 L1400.3,800.6 L1410.4,788.4 L1420.5,788.4 L1430.6,790.5 L1440.6,796.6 L1450.7,794.1 L1460.8,799.2 L1470.9,793.5 L1481.0,793.1 L1481.0,812.2 L1470.9,812.2 L1460.8,812.2 L1450.7,812.2 L1440.6,812.2 L1430.6,812.2 L1420.5,812.2 L1410.4,812.2 L1400.3,812.2 L1390.2,812.2 L1380.1,812.2 L1370.0,812.2 L1360.0,812.2 L1349.9,812.2 L1339.8,812.2 L1329.7,812.2 L1319.6,812.2 L1309.5,812.2 L1299.4,812.2 L1289.4,812.2 L1279.3,812.2 L1269.2,812.2 L1259.1,812.2 L1249.0,812.2 L1238.9,812.2 L1228.8,812.2 L1218.8,812.2 L1208.7,812.2 L1198.6,812.2 L1188.5,812.2 L1178.4,812.2 L1168.3,812.2 L1158.2,812.2 L1148.2,812.2 L1138.1,812.2 L1128.0,812.2 L1117.9,812.2 L1107.8,812.2 L1097.7,812.2 L1087.6,812.2 L1077.5,812.2 L1067.5,812.2 L1057.4,812.2 L1047.3,812.2 L1037.2,812.2 L1027.1,812.2 L1017.0,812.2 L1006.9,812.2 L996.9,812.2 L986.8,812.2 L976.7,812.2 L966.6,812.2 L956.5,812.2 L946.4,812.2 L936.3,812.2 L926.3,812.2 L916.2,812.2 L906.1,812.2 L896.0,812.2Z" fill="#dfa0e1"/>
<path d="M896.0,796.3 L906.1,774.4 L916.2,776.1 L926.3,775.4 L936.3,786.2 L946.4,787.9 L956.5,800.6 L966.6,789.4 L976.7,791.3 L986.8,799.9 L996.9,786.2 L1006.9,783.3 L1017.0,793.1 L1027.1,786.6 L1037.2,791.7 L1047.3,785.5 L1057.4,789.1 L1067.5,787.4 L1077.5,786.2 L1087.6,792.7 L1097.7,788.8 L1107.8,793.7 L1117.9,786.2 L1128.0,774.4 L1138.1,776.1 L1148.2,784.0 L1158.2,792.0 L1168.3,791.3 L1178.4,791.7 L1188.5,793.7 L1198.6,788.4 L1208.7,790.5 L1218.8,785.5 L1228.8,778.7 L1238.9,787.6 L1249.0,792.7 L1259.1,793.7 L1269.2,786.2 L1279.3,786.2 L1289.4,779.7 L1299.4,791.3 L1309.5,792.0 L1319.6,788.4 L1329.7,796.3 L1339.8,783.3 L1349.9,781.1 L1360.0,780.4 L1370.0,784.0 L1380.1,786.2 L1390.2,786.9 L1400.3,791.3 L1410.4,776.8 L1420.5,776.1 L1430.6,780.4 L1440.6,781.1 L1450.7,784.8 L1460.8,782.2 L1470.9,781.1 L1481.0,783.0 L1481.0,793.1 L1470.9,793.5 L1460.8,799.2 L1450.7,794.1 L1440.6,796.6 L1430.6,790.5 L1420.5,788.4 L1410.4,788.4 L1400.3,800.6 L1390.2,797.5 L1380.1,799.2 L1370.0,792.7 L1360.0,794.1 L1349.9,793.1 L1339.8,792.7 L1329.7,801.4 L1319.6,797.5 L1309.5,795.2 L1299.4,797.8 L1289.4,788.4 L1279.3,796.3 L1269.2,796.6 L1259.1,799.9 L1249.0,801.8 L1238.9,796.0 L1228.8,799.9 L1218.8,801.4 L1208.7,795.6 L1198.6,798.5 L1188.5,799.9 L1178.4,797.8 L1168.3,798.5 L1158.2,798.0 L1148.2,794.9 L1138.1,793.4 L1128.0,787.6 L1117.9,798.0 L1107.8,798.0 L1097.7,793.1 L1087.6,799.9 L1077.5,795.6 L1067.5,794.6 L1057.4,796.0 L1047.3,798.0 L1037.2,799.9 L1027.1,795.6 L1017.0,798.5 L1006.9,796.3 L996.9,794.1 L986.8,804.3 L976.7,798.5 L966.6,794.6 L956.5,805.3 L946.4,797.5 L936.3,796.0 L926.3,794.9 L916.2,785.5 L906.1,792.7 L896.0,804.7Z" fill="#c9ad9b"/>
<path d="M896.0,792.7 L906.1,750.4 L916.2,766.0 L926.3,759.0 L936.3,775.4 L946.4,775.8 L956.5,785.5 L966.6,784.0 L976.7,785.5 L986.8,797.0 L996.9,770.3 L1006.9,777.5 L1017.0,785.5 L1027.1,768.1 L1037.2,786.9 L1047.3,784.0 L1057.4,784.0 L1067.5,775.4 L1077.5,774.4 L1087.6,782.6 L1097.7,784.0 L1107.8,792.7 L1117.9,766.0 L1128.0,758.8 L1138.1,761.6 L1148.2,779.7 L1158.2,790.2 L1168.3,783.3 L1178.4,789.1 L1188.5,784.8 L1198.6,775.4 L1208.7,784.0 L1218.8,774.6 L1228.8,762.4 L1238.9,779.7 L1249.0,790.5 L1259.1,789.1 L1269.2,778.3 L1279.3,776.1 L1289.4,766.0 L1299.4,783.3 L1309.5,788.8 L1319.6,778.3 L1329.7,791.3 L1339.8,750.1 L1349.9,777.5 L1360.0,765.3 L1370.0,758.8 L1380.1,772.5 L1390.2,779.7 L1400.3,771.8 L1410.4,768.1 L1420.5,757.3 L1430.6,767.4 L1440.6,773.2 L1450.7,769.6 L1460.8,776.1 L1470.9,778.9 L1481.0,769.2 L1481.0,783.0 L1470.9,781.1 L1460.8,782.2 L1450.7,784.8 L1440.6,781.1 L1430.6,780.4 L1420.5,776.1 L1410.4,776.8 L1400.3,791.3 L1390.2,786.9 L1380.1,786.2 L1370.0,784.0 L1360.0,780.4 L1349.9,781.1 L1339.8,783.3 L1329.7,796.3 L1319.6,788.4 L1309.5,792.0 L1299.4,791.3 L1289.4,779.7 L1279.3,786.2 L1269.2,786.2 L1259.1,793.7 L1249.0,792.7 L1238.9,787.6 L1228.8,778.7 L1218.8,785.5 L1208.7,790.5 L1198.6,788.4 L1188.5,793.7 L1178.4,791.7 L1168.3,791.3 L1158.2,792.0 L1148.2,784.0 L1138.1,776.1 L1128.0,774.4 L1117.9,786.2 L1107.8,793.7 L1097.7,788.8 L1087.6,792.7 L1077.5,786.2 L1067.5,787.4 L1057.4,789.1 L1047.3,785.5 L1037.2,791.7 L1027.1,786.6 L1017.0,793.1 L1006.9,783.3 L996.9,786.2 L986.8,799.9 L976.7,791.3 L966.6,789.4 L956.5,800.6 L946.4,787.9 L936.3,786.2 L926.3,775.4 L916.2,776.1 L906.1,774.4 L896.0,796.3Z" fill="#f29b9b"/>
<path d="M896.0,782.2 L906.1,731.3 L916.2,749.4 L926.3,736.4 L936.3,761.4 L946.4,762.4 L956.5,768.1 L966.6,771.0 L976.7,771.5 L986.8,788.4 L996.9,751.3 L1006.9,759.5 L1017.0,772.5 L1027.1,750.1 L1037.2,771.8 L1047.3,772.5 L1057.4,761.6 L1067.5,758.8 L1077.5,755.9 L1087.6,767.4 L1097.7,768.9 L1107.8,784.8 L1117.9,750.8 L1128.0,745.0 L1138.1,744.3 L1148.2,759.5 L1158.2,769.6 L1168.3,768.9 L1178.4,772.5 L1188.5,772.5 L1198.6,763.8 L1208.7,766.0 L1218.8,752.3 L1228.8,746.5 L1238.9,766.0 L1249.0,784.0 L1259.1,779.0 L1269.2,758.0 L1279.3,759.5 L1289.4,747.2 L1299.4,760.2 L1309.5,771.8 L1319.6,766.0 L1329.7,773.9 L1339.8,729.2 L1349.9,755.4 L1360.0,754.4 L1370.0,740.7 L1380.1,759.9 L1390.2,761.6 L1400.3,762.4 L1410.4,748.7 L1420.5,740.7 L1430.6,753.0 L1440.6,754.4 L1450.7,753.0 L1460.8,769.6 L1470.9,748.3 L1481.0,753.9 L1481.0,769.2 L1470.9,778.9 L1460.8,776.1 L1450.7,769.6 L1440.6,773.2 L1430.6,767.4 L1420.5,757.3 L1410.4,768.1 L1400.3,771.8 L1390.2,779.7 L1380.1,772.5 L1370.0,758.8 L1360.0,765.3 L1349.9,777.5 L1339.8,750.1 L1329.7,791.3 L1319.6,778.3 L1309.5,788.8 L1299.4,783.3 L1289.4,766.0 L1279.3,776.1 L1269.2,778.3 L1259.1,789.1 L1249.0,790.5 L1238.9,779.7 L1228.8,762.4 L1218.8,774.6 L1208.7,784.0 L1198.6,775.4 L1188.5,784.8 L1178.4,789.1 L1168.3,783.3 L1158.2,790.2 L1148.2,779.7 L1138.1,761.6 L1128.0,758.8 L1117.9,766.0 L1107.8,792.7 L1097.7,784.0 L1087.6,782.6 L1077.5,774.4 L1067.5,775.4 L1057.4,784.0 L1047.3,784.0 L1037.2,786.9 L1027.1,768.1 L1017.0,785.5 L1006.9,777.5 L996.9,770.3 L986.8,797.0 L976.7,785.5 L966.6,784.0 L956.5,785.5 L946.4,775.8 L936.3,775.4 L926.3,759.0 L916.2,766.0 L906.1,750.4 L896.0,792.7Z" fill="#a4aaf2"/>
<path d="M896.0,772.5 L906.1,714.7 L916.2,740.0 L926.3,719.8 L936.3,745.8 L946.4,744.3 L956.5,760.5 L966.6,762.4 L976.7,759.5 L986.8,781.6 L996.9,742.2 L1006.9,750.1 L1017.0,756.2 L1027.1,737.8 L1037.2,758.0 L1047.3,760.2 L1057.4,750.8 L1067.5,748.7 L1077.5,742.9 L1087.6,754.4 L1097.7,760.2 L1107.8,775.4 L1117.9,739.3 L1128.0,729.2 L1138.1,735.7 L1148.2,747.2 L1158.2,756.6 L1168.3,762.4 L1178.4,763.1 L1188.5,764.2 L1198.6,750.1 L1208.7,752.3 L1218.8,734.9 L1228.8,732.8 L1238.9,755.9 L1249.0,780.4 L1259.1,771.8 L1269.2,745.0 L1279.3,747.9 L1289.4,740.0 L1299.4,748.7 L1309.5,761.6 L1319.6,750.8 L1329.7,764.5 L1339.8,714.7 L1349.9,740.0 L1360.0,743.6 L1370.0,727.0 L1380.1,740.7 L1390.2,754.4 L1400.3,752.3 L1410.4,731.3 L1420.5,733.5 L1430.6,737.1 L1440.6,742.2 L1450.7,740.0 L1460.8,759.5 L1470.9,738.6 L1481.0,742.8 L1481.0,753.9 L1470.9,748.3 L1460.8,769.6 L1450.7,753.0 L1440.6,754.4 L1430.6,753.0 L1420.5,740.7 L1410.4,748.7 L1400.3,762.4 L1390.2,761.6 L1380.1,759.9 L1370.0,740.7 L1360.0,754.4 L1349.9,755.4 L1339.8,729.2 L1329.7,773.9 L1319.6,766.0 L1309.5,771.8 L1299.4,760.2 L1289.4,747.2 L1279.3,759.5 L1269.2,758.0 L1259.1,779.0 L1249.0,784.0 L1238.9,766.0 L1228.8,746.5 L1218.8,752.3 L1208.7,766.0 L1198.6,763.8 L1188.5,772.5 L1178.4,772.5 L1168.3,768.9 L1158.2,769.6 L1148.2,759.5 L1138.1,744.3 L1128.0,745.0 L1117.9,750.8 L1107.8,784.8 L1097.7,768.9 L1087.6,767.4 L1077.5,755.9 L1067.5,758.8 L1057.4,761.6 L1047.3,772.5 L1037.2,771.8 L1027.1,750.1 L1017.0,772.5 L1006.9,759.5 L996.9,751.3 L986.8,788.4 L976.7,771.5 L966.6,771.0 L956.5,768.1 L946.4,762.4 L936.3,761.4 L926.3,736.4 L916.2,749.4 L906.1,731.3 L896.0,782.2Z" fill="#a2c89e"/>
<path d="M896.0,754.4 L906.1,689.5 L916.2,721.9 L926.3,672.8 L936.3,727.7 L946.4,715.4 L956.5,750.1 L966.6,745.8 L976.7,743.6 L986.8,779.0 L996.9,714.7 L1006.9,734.9 L1017.0,728.4 L1027.1,720.5 L1037.2,742.9 L1047.3,737.8 L1057.4,736.4 L1067.5,737.1 L1077.5,732.0 L1087.6,735.7 L1097.7,748.7 L1107.8,763.1 L1117.9,721.9 L1128.0,706.1 L1138.1,714.7 L1148.2,731.3 L1158.2,740.7 L1168.3,745.0 L1178.4,739.3 L1188.5,755.9 L1198.6,715.4 L1208.7,704.6 L1218.8,717.6 L1228.8,715.4 L1238.9,742.9 L1249.0,772.5 L1259.1,755.9 L1269.2,721.9 L1279.3,730.6 L1289.4,734.2 L1299.4,732.0 L1309.5,748.7 L1319.6,738.5 L1329.7,755.9 L1339.8,698.8 L1349.9,719.8 L1360.0,727.0 L1370.0,697.4 L1380.1,717.6 L1390.2,737.8 L1400.3,740.0 L1410.4,705.3 L1420.5,718.3 L1430.6,715.4 L1440.6,719.8 L1450.7,712.6 L1460.8,748.1 L1470.9,730.3 L1481.0,722.0 L1481.0,742.8 L1470.9,738.6 L1460.8,759.5 L1450.7,740.0 L1440.6,742.2 L1430.6,737.1 L1420.5,733.5 L1410.4,731.3 L1400.3,752.3 L1390.2,754.4 L1380.1,740.7 L1370.0,727.0 L1360.0,743.6 L1349.9,740.0 L1339.8,714.7 L1329.7,764.5 L1319.6,750.8 L1309.5,761.6 L1299.4,748.7 L1289.4,740.0 L1279.3,747.9 L1269.2,745.0 L1259.1,771.8 L1249.0,780.4 L1238.9,755.9 L1228.8,732.8 L1218.8,734.9 L1208.7,752.3 L1198.6,750.1 L1188.5,764.2 L1178.4,763.1 L1168.3,762.4 L1158.2,756.6 L1148.2,747.2 L1138.1,735.7 L1128.0,729.2 L1117.9,739.3 L1107.8,775.4 L1097.7,760.2 L1087.6,754.4 L1077.5,742.9 L1067.5,748.7 L1057.4,750.8 L1047.3,760.2 L1037.2,758.0 L1027.1,737.8 L1017.0,756.2 L1006.9,750.1 L996.9,742.2 L986.8,781.6 L976.7,759.5 L966.6,762.4 L956.5,760.5 L946.4,744.3 L936.3,745.8 L926.3,719.8 L916.2,740.0 L906.1,714.7 L896.0,772.5Z" fill="#fbbf8e"/>
<path d="M896.0,724.1 L906.1,636.0 L916.2,688.7 L926.3,633.1 L936.3,698.8 L946.4,682.2 L956.5,718.3 L966.6,715.4 L976.7,714.7 L986.8,777.5 L996.9,677.9 L1006.9,703.2 L1017.0,694.4 L1027.1,678.6 L1037.2,720.4 L1047.3,706.8 L1057.4,693.8 L1067.5,693.1 L1077.5,708.9 L1087.6,695.2 L1097.7,711.8 L1107.8,723.4 L1117.9,692.3 L1128.0,667.8 L1138.1,659.1 L1148.2,703.9 L1158.2,711.1 L1168.3,706.8 L1178.4,709.7 L1188.5,731.3 L1198.6,679.3 L1208.7,669.2 L1218.8,672.8 L1228.8,677.9 L1238.9,710.0 L1249.0,747.9 L1259.1,736.4 L1269.2,685.1 L1279.3,690.9 L1289.4,693.1 L1299.4,687.3 L1309.5,706.8 L1319.6,706.8 L1329.7,720.5 L1339.8,662.0 L1349.9,689.5 L1360.0,689.5 L1370.0,654.1 L1380.1,683.0 L1390.2,696.7 L1400.3,695.2 L1410.4,667.1 L1420.5,688.0 L1430.6,673.6 L1440.6,685.1 L1450.7,686.0 L1460.8,697.0 L1470.9,694.2 L1481.0,687.2 L1481.0,722.0 L1470.9,730.3 L1460.8,748.1 L1450.7,712.6 L1440.6,719.8 L1430.6,715.4 L1420.5,718.3 L1410.4,705.3 L1400.3,740.0 L1390.2,737.8 L1380.1,717.6 L1370.0,697.4 L1360.0,727.0 L1349.9,719.8 L1339.8,698.8 L1329.7,755.9 L1319.6,738.5 L1309.5,748.7 L1299.4,732.0 L1289.4,734.2 L1279.3,730.6 L1269.2,721.9 L1259.1,755.9 L1249.0,772.5 L1238.9,742.9 L1228.8,715.4 L1218.8,717.6 L1208.7,704.6 L1198.6,715.4 L1188.5,755.9 L1178.4,739.3 L1168.3,745.0 L1158.2,740.7 L1148.2,731.3 L1138.1,714.7 L1128.0,706.1 L1117.9,721.9 L1107.8,763.1 L1097.7,748.7 L1087.6,735.7 L1077.5,732.0 L1067.5,737.1 L1057.4,736.4 L1047.3,737.8 L1037.2,742.9 L1027.1,720.5 L1017.0,728.4 L1006.9,734.9 L996.9,714.7 L986.8,779.0 L976.7,743.6 L966.6,745.8 L956.5,750.1 L946.4,715.4 L936.3,727.7 L926.3,672.8 L916.2,721.9 L906.1,689.5 L896.0,754.4Z" fill="#9edbd9"/>
<path d="M896.0,698.8 L906.1,620.1 L916.2,663.5 L926.3,619.4 L936.3,690.9 L946.4,659.8 L956.5,707.5 L966.6,703.2 L976.7,696.7 L986.8,774.6 L996.9,667.1 L1006.9,690.9 L1017.0,680.8 L1027.1,655.5 L1037.2,708.2 L1047.3,694.4 L1057.4,662.0 L1067.5,679.3 L1077.5,696.1 L1087.6,671.4 L1097.7,706.8 L1107.8,698.8 L1117.9,688.0 L1128.0,653.3 L1138.1,652.6 L1148.2,693.8 L1158.2,703.9 L1168.3,679.3 L1178.4,696.7 L1188.5,727.3 L1198.6,645.4 L1208.7,655.5 L1218.8,668.5 L1228.8,653.3 L1238.9,693.8 L1249.0,739.3 L1259.1,728.4 L1269.2,679.3 L1279.3,649.0 L1289.4,673.6 L1299.4,651.2 L1309.5,693.1 L1319.6,693.8 L1329.7,694.4 L1339.8,627.3 L1349.9,658.4 L1360.0,653.3 L1370.0,645.4 L1380.1,659.1 L1390.2,688.0 L1400.3,684.4 L1410.4,612.2 L1420.5,677.9 L1430.6,662.0 L1440.6,675.7 L1450.7,663.2 L1460.8,674.9 L1470.9,687.0 L1481.0,676.1 L1481.0,687.2 L1470.9,694.2 L1460.8,697.0 L1450.7,686.0 L1440.6,685.1 L1430.6,673.6 L1420.5,688.0 L1410.4,667.1 L1400.3,695.2 L1390.2,696.7 L1380.1,683.0 L1370.0,654.1 L1360.0,689.5 L1349.9,689.5 L1339.8,662.0 L1329.7,720.5 L1319.6,706.8 L1309.5,706.8 L1299.4,687.3 L1289.4,693.1 L1279.3,690.9 L1269.2,685.1 L1259.1,736.4 L1249.0,747.9 L1238.9,710.0 L1228.8,677.9 L1218.8,672.8 L1208.7,669.2 L1198.6,679.3 L1188.5,731.3 L1178.4,709.7 L1168.3,706.8 L1158.2,711.1 L1148.2,703.9 L1138.1,659.1 L1128.0,667.8 L1117.9,692.3 L1107.8,723.4 L1097.7,711.8 L1087.6,695.2 L1077.5,708.9 L1067.5,693.1 L1057.4,693.8 L1047.3,706.8 L1037.2,720.4 L1027.1,678.6 L1017.0,694.4 L1006.9,703.2 L996.9,677.9 L986.8,777.5 L976.7,714.7 L966.6,715.4 L956.5,718.3 L946.4,682.2 L936.3,698.8 L926.3,633.1 L916.2,688.7 L906.1,636.0 L896.0,724.1Z" fill="#f9aec8"/>
<path d="M896.0,690.9 L906.1,603.5 L916.2,646.1 L926.3,610.7 L936.3,675.0 L946.4,637.5 L956.5,698.1 L966.6,690.9 L976.7,680.8 L986.8,771.8 L996.9,653.3 L1006.9,676.5 L1017.0,655.5 L1027.1,646.1 L1037.2,699.6 L1047.3,690.9 L1057.4,649.7 L1067.5,666.3 L1077.5,685.8 L1087.6,656.2 L1097.7,697.4 L1107.8,693.1 L1117.9,669.2 L1128.0,637.5 L1138.1,640.3 L1148.2,679.3 L1158.2,692.3 L1168.3,663.5 L1178.4,688.0 L1188.5,713.4 L1198.6,636.7 L1208.7,638.2 L1218.8,651.9 L1228.8,636.0 L1238.9,682.2 L1249.0,724.1 L1259.1,714.7 L1269.2,657.7 L1279.3,634.6 L1289.4,661.3 L1299.4,631.7 L1309.5,680.8 L1319.6,684.4 L1329.7,683.7 L1339.8,609.3 L1349.9,648.3 L1360.0,639.6 L1370.0,625.2 L1380.1,647.6 L1390.2,676.5 L1400.3,660.6 L1410.4,596.3 L1420.5,661.3 L1430.6,641.1 L1440.6,659.1 L1450.7,651.6 L1460.8,657.6 L1470.9,674.7 L1481.0,666.4 L1481.0,676.1 L1470.9,687.0 L1460.8,674.9 L1450.7,663.2 L1440.6,675.7 L1430.6,662.0 L1420.5,677.9 L1410.4,612.2 L1400.3,684.4 L1390.2,688.0 L1380.1,659.1 L1370.0,645.4 L1360.0,653.3 L1349.9,658.4 L1339.8,627.3 L1329.7,694.4 L1319.6,693.8 L1309.5,693.1 L1299.4,651.2 L1289.4,673.6 L1279.3,649.0 L1269.2,679.3 L1259.1,728.4 L1249.0,739.3 L1238.9,693.8 L1228.8,653.3 L1218.8,668.5 L1208.7,655.5 L1198.6,645.4 L1188.5,727.3 L1178.4,696.7 L1168.3,679.3 L1158.2,703.9 L1148.2,693.8 L1138.1,652.6 L1128.0,653.3 L1117.9,688.0 L1107.8,698.8 L1097.7,706.8 L1087.6,671.4 L1077.5,696.1 L1067.5,679.3 L1057.4,662.0 L1047.3,694.4 L1037.2,708.2 L1027.1,655.5 L1017.0,680.8 L1006.9,690.9 L996.9,667.1 L986.8,774.6 L976.7,696.7 L966.6,703.2 L956.5,707.5 L946.4,659.8 L936.3,690.9 L926.3,619.4 L916.2,663.5 L906.1,620.1 L896.0,698.8Z" fill="#f9d8a6"/>
<path d="M896.0,676.5 L906.1,578.2 L916.2,619.4 L926.3,589.1 L936.3,656.2 L946.4,616.5 L956.5,680.1 L966.6,670.7 L976.7,661.3 L986.8,770.6 L996.9,634.6 L1006.9,659.1 L1017.0,641.8 L1027.1,628.1 L1037.2,681.5 L1047.3,671.4 L1057.4,625.2 L1067.5,640.3 L1077.5,661.3 L1087.6,631.4 L1097.7,678.6 L1107.8,677.2 L1117.9,650.5 L1128.0,610.7 L1138.1,620.8 L1148.2,653.3 L1158.2,676.5 L1168.3,644.7 L1178.4,666.3 L1188.5,692.3 L1198.6,602.8 L1208.7,619.4 L1218.8,623.7 L1228.8,619.4 L1238.9,666.3 L1249.0,710.4 L1259.1,694.4 L1269.2,629.5 L1279.3,612.9 L1289.4,643.2 L1299.4,615.8 L1309.5,660.6 L1319.6,655.5 L1329.7,666.3 L1339.8,595.6 L1349.9,631.7 L1360.0,620.1 L1370.0,604.2 L1380.1,630.2 L1390.2,657.0 L1400.3,643.2 L1410.4,573.9 L1420.5,632.4 L1430.6,620.8 L1440.6,638.2 L1450.7,621.1 L1460.8,636.6 L1470.9,657.4 L1481.0,649.7 L1481.0,666.4 L1470.9,674.7 L1460.8,657.6 L1450.7,651.6 L1440.6,659.1 L1430.6,641.1 L1420.5,661.3 L1410.4,596.3 L1400.3,660.6 L1390.2,676.5 L1380.1,647.6 L1370.0,625.2 L1360.0,639.6 L1349.9,648.3 L1339.8,609.3 L1329.7,683.7 L1319.6,684.4 L1309.5,680.8 L1299.4,631.7 L1289.4,661.3 L1279.3,634.6 L1269.2,657.7 L1259.1,714.7 L1249.0,724.1 L1238.9,682.2 L1228.8,636.0 L1218.8,651.9 L1208.7,638.2 L1198.6,636.7 L1188.5,713.4 L1178.4,688.0 L1168.3,663.5 L1158.2,692.3 L1148.2,679.3 L1138.1,640.3 L1128.0,637.5 L1117.9,669.2 L1107.8,693.1 L1097.7,697.4 L1087.6,656.2 L1077.5,685.8 L1067.5,666.3 L1057.4,649.7 L1047.3,690.9 L1037.2,699.6 L1027.1,646.1 L1017.0,655.5 L1006.9,676.5 L996.9,653.3 L986.8,771.8 L976.7,680.8 L966.6,690.9 L956.5,698.1 L946.4,637.5 L936.3,675.0 L926.3,610.7 L916.2,646.1 L906.1,603.5 L896.0,690.9Z" fill="#9ac3ef"/>
<path d="M896.0,804.7 L906.1,792.7 L916.2,785.5 L926.3,794.9 L936.3,796.0 L946.4,797.5 L956.5,805.3 L966.6,794.6 L976.7,798.5 L986.8,804.3 L996.9,794.1 L1006.9,796.3 L1017.0,798.5 L1027.1,795.6 L1037.2,799.9 L1047.3,798.0 L1057.4,796.0 L1067.5,794.6 L1077.5,795.6 L1087.6,799.9 L1097.7,793.1 L1107.8,798.0 L1117.9,798.0 L1128.0,787.6 L1138.1,793.4 L1148.2,794.9 L1158.2,798.0 L1168.3,798.5 L1178.4,797.8 L1188.5,799.9 L1198.6,798.5 L1208.7,795.6 L1218.8,801.4 L1228.8,799.9 L1238.9,796.0 L1249.0,801.8 L1259.1,799.9 L1269.2,796.6 L1279.3,796.3 L1289.4,788.4 L1299.4,797.8 L1309.5,795.2 L1319.6,797.5 L1329.7,801.4 L1339.8,792.7 L1349.9,793.1 L1360.0,794.1 L1370.0,792.7 L1380.1,799.2 L1390.2,797.5 L1400.3,800.6 L1410.4,788.4 L1420.5,788.4 L1430.6,790.5 L1440.6,796.6 L1450.7,794.1 L1460.8,799.2 L1470.9,793.5 L1481.0,793.1" fill="none" stroke="#c650d8" stroke-width="1.25" stroke-linejoin="miter" stroke-miterlimit="10"/>
<path d="M896.0,796.3 L906.1,774.4 L916.2,776.1 L926.3,775.4 L936.3,786.2 L946.4,787.9 L956.5,800.6 L966.6,789.4 L976.7,791.3 L986.8,799.9 L996.9,786.2 L1006.9,783.3 L1017.0,793.1 L1027.1,786.6 L1037.2,791.7 L1047.3,785.5 L1057.4,789.1 L1067.5,787.4 L1077.5,786.2 L1087.6,792.7 L1097.7,788.8 L1107.8,793.7 L1117.9,786.2 L1128.0,774.4 L1138.1,776.1 L1148.2,784.0 L1158.2,792.0 L1168.3,791.3 L1178.4,791.7 L1188.5,793.7 L1198.6,788.4 L1208.7,790.5 L1218.8,785.5 L1228.8,778.7 L1238.9,787.6 L1249.0,792.7 L1259.1,793.7 L1269.2,786.2 L1279.3,786.2 L1289.4,779.7 L1299.4,791.3 L1309.5,792.0 L1319.6,788.4 L1329.7,796.3 L1339.8,783.3 L1349.9,781.1 L1360.0,780.4 L1370.0,784.0 L1380.1,786.2 L1390.2,786.9 L1400.3,791.3 L1410.4,776.8 L1420.5,776.1 L1430.6,780.4 L1440.6,781.1 L1450.7,784.8 L1460.8,782.2 L1470.9,781.1 L1481.0,783.0" fill="none" stroke="#8f5b3c" stroke-width="1.25" stroke-linejoin="miter" stroke-miterlimit="10"/>
<path d="M896.0,792.7 L906.1,750.4 L916.2,766.0 L926.3,759.0 L936.3,775.4 L946.4,775.8 L956.5,785.5 L966.6,784.0 L976.7,785.5 L986.8,797.0 L996.9,770.3 L1006.9,777.5 L1017.0,785.5 L1027.1,768.1 L1037.2,786.9 L1047.3,784.0 L1057.4,784.0 L1067.5,775.4 L1077.5,774.4 L1087.6,782.6 L1097.7,784.0 L1107.8,792.7 L1117.9,766.0 L1128.0,758.8 L1138.1,761.6 L1148.2,779.7 L1158.2,790.2 L1168.3,783.3 L1178.4,789.1 L1188.5,784.8 L1198.6,775.4 L1208.7,784.0 L1218.8,774.6 L1228.8,762.4 L1238.9,779.7 L1249.0,790.5 L1259.1,789.1 L1269.2,778.3 L1279.3,776.1 L1289.4,766.0 L1299.4,783.3 L1309.5,788.8 L1319.6,778.3 L1329.7,791.3 L1339.8,750.1 L1349.9,777.5 L1360.0,765.3 L1370.0,758.8 L1380.1,772.5 L1390.2,779.7 L1400.3,771.8 L1410.4,768.1 L1420.5,757.3 L1430.6,767.4 L1440.6,773.2 L1450.7,769.6 L1460.8,776.1 L1470.9,778.9 L1481.0,769.2" fill="none" stroke="#e6484a" stroke-width="1.25" stroke-linejoin="miter" stroke-miterlimit="10"/>
<path d="M896.0,782.2 L906.1,731.3 L916.2,749.4 L926.3,736.4 L936.3,761.4 L946.4,762.4 L956.5,768.1 L966.6,771.0 L976.7,771.5 L986.8,788.4 L996.9,751.3 L1006.9,759.5 L1017.0,772.5 L1027.1,750.1 L1037.2,771.8 L1047.3,772.5 L1057.4,761.6 L1067.5,758.8 L1077.5,755.9 L1087.6,767.4 L1097.7,768.9 L1107.8,784.8 L1117.9,750.8 L1128.0,745.0 L1138.1,744.3 L1148.2,759.5 L1158.2,769.6 L1168.3,768.9 L1178.4,772.5 L1188.5,772.5 L1198.6,763.8 L1208.7,766.0 L1218.8,752.3 L1228.8,746.5 L1238.9,766.0 L1249.0,784.0 L1259.1,779.0 L1269.2,758.0 L1279.3,759.5 L1289.4,747.2 L1299.4,760.2 L1309.5,771.8 L1319.6,766.0 L1329.7,773.9 L1339.8,729.2 L1349.9,755.4 L1360.0,754.4 L1370.0,740.7 L1380.1,759.9 L1390.2,761.6 L1400.3,762.4 L1410.4,748.7 L1420.5,740.7 L1430.6,753.0 L1440.6,754.4 L1450.7,753.0 L1460.8,769.6 L1470.9,748.3 L1481.0,753.9" fill="none" stroke="#5a60f0" stroke-width="1.25" stroke-linejoin="miter" stroke-miterlimit="10"/>
<path d="M896.0,772.5 L906.1,714.7 L916.2,740.0 L926.3,719.8 L936.3,745.8 L946.4,744.3 L956.5,760.5 L966.6,762.4 L976.7,759.5 L986.8,781.6 L996.9,742.2 L1006.9,750.1 L1017.0,756.2 L1027.1,737.8 L1037.2,758.0 L1047.3,760.2 L1057.4,750.8 L1067.5,748.7 L1077.5,742.9 L1087.6,754.4 L1097.7,760.2 L1107.8,775.4 L1117.9,739.3 L1128.0,729.2 L1138.1,735.7 L1148.2,747.2 L1158.2,756.6 L1168.3,762.4 L1178.4,763.1 L1188.5,764.2 L1198.6,750.1 L1208.7,752.3 L1218.8,734.9 L1228.8,732.8 L1238.9,755.9 L1249.0,780.4 L1259.1,771.8 L1269.2,745.0 L1279.3,747.9 L1289.4,740.0 L1299.4,748.7 L1309.5,761.6 L1319.6,750.8 L1329.7,764.5 L1339.8,714.7 L1349.9,740.0 L1360.0,743.6 L1370.0,727.0 L1380.1,740.7 L1390.2,754.4 L1400.3,752.3 L1410.4,731.3 L1420.5,733.5 L1430.6,737.1 L1440.6,742.2 L1450.7,740.0 L1460.8,759.5 L1470.9,738.6 L1481.0,742.8" fill="none" stroke="#3b9a45" stroke-width="1.25" stroke-linejoin="miter" stroke-miterlimit="10"/>
<path d="M896.0,754.4 L906.1,689.5 L916.2,721.9 L926.3,672.8 L936.3,727.7 L946.4,715.4 L956.5,750.1 L966.6,745.8 L976.7,743.6 L986.8,779.0 L996.9,714.7 L1006.9,734.9 L1017.0,728.4 L1027.1,720.5 L1037.2,742.9 L1047.3,737.8 L1057.4,736.4 L1067.5,737.1 L1077.5,732.0 L1087.6,735.7 L1097.7,748.7 L1107.8,763.1 L1117.9,721.9 L1128.0,706.1 L1138.1,714.7 L1148.2,731.3 L1158.2,740.7 L1168.3,745.0 L1178.4,739.3 L1188.5,755.9 L1198.6,715.4 L1208.7,704.6 L1218.8,717.6 L1228.8,715.4 L1238.9,742.9 L1249.0,772.5 L1259.1,755.9 L1269.2,721.9 L1279.3,730.6 L1289.4,734.2 L1299.4,732.0 L1309.5,748.7 L1319.6,738.5 L1329.7,755.9 L1339.8,698.8 L1349.9,719.8 L1360.0,727.0 L1370.0,697.4 L1380.1,717.6 L1390.2,737.8 L1400.3,740.0 L1410.4,705.3 L1420.5,718.3 L1430.6,715.4 L1440.6,719.8 L1450.7,712.6 L1460.8,748.1 L1470.9,730.3 L1481.0,722.0" fill="none" stroke="#f68b2a" stroke-width="1.25" stroke-linejoin="miter" stroke-miterlimit="10"/>
<path d="M896.0,724.1 L906.1,636.0 L916.2,688.7 L926.3,633.1 L936.3,698.8 L946.4,682.2 L956.5,718.3 L966.6,715.4 L976.7,714.7 L986.8,777.5 L996.9,677.9 L1006.9,703.2 L1017.0,694.4 L1027.1,678.6 L1037.2,720.4 L1047.3,706.8 L1057.4,693.8 L1067.5,693.1 L1077.5,708.9 L1087.6,695.2 L1097.7,711.8 L1107.8,723.4 L1117.9,692.3 L1128.0,667.8 L1138.1,659.1 L1148.2,703.9 L1158.2,711.1 L1168.3,706.8 L1178.4,709.7 L1188.5,731.3 L1198.6,679.3 L1208.7,669.2 L1218.8,672.8 L1228.8,677.9 L1238.9,710.0 L1249.0,747.9 L1259.1,736.4 L1269.2,685.1 L1279.3,690.9 L1289.4,693.1 L1299.4,687.3 L1309.5,706.8 L1319.6,706.8 L1329.7,720.5 L1339.8,662.0 L1349.9,689.5 L1360.0,689.5 L1370.0,654.1 L1380.1,683.0 L1390.2,696.7 L1400.3,695.2 L1410.4,667.1 L1420.5,688.0 L1430.6,673.6 L1440.6,685.1 L1450.7,686.0 L1460.8,697.0 L1470.9,694.2 L1481.0,687.2" fill="none" stroke="#2fb5ae" stroke-width="1.25" stroke-linejoin="miter" stroke-miterlimit="10"/>
<path d="M896.0,698.8 L906.1,620.1 L916.2,663.5 L926.3,619.4 L936.3,690.9 L946.4,659.8 L956.5,707.5 L966.6,703.2 L976.7,696.7 L986.8,774.6 L996.9,667.1 L1006.9,690.9 L1017.0,680.8 L1027.1,655.5 L1037.2,708.2 L1047.3,694.4 L1057.4,662.0 L1067.5,679.3 L1077.5,696.1 L1087.6,671.4 L1097.7,706.8 L1107.8,698.8 L1117.9,688.0 L1128.0,653.3 L1138.1,652.6 L1148.2,693.8 L1158.2,703.9 L1168.3,679.3 L1178.4,696.7 L1188.5,727.3 L1198.6,645.4 L1208.7,655.5 L1218.8,668.5 L1228.8,653.3 L1238.9,693.8 L1249.0,739.3 L1259.1,728.4 L1269.2,679.3 L1279.3,649.0 L1289.4,673.6 L1299.4,651.2 L1309.5,693.1 L1319.6,693.8 L1329.7,694.4 L1339.8,627.3 L1349.9,658.4 L1360.0,653.3 L1370.0,645.4 L1380.1,659.1 L1390.2,688.0 L1400.3,684.4 L1410.4,612.2 L1420.5,677.9 L1430.6,662.0 L1440.6,675.7 L1450.7,663.2 L1460.8,674.9 L1470.9,687.0 L1481.0,676.1" fill="none" stroke="#f0608e" stroke-width="1.25" stroke-linejoin="miter" stroke-miterlimit="10"/>
<path d="M896.0,690.9 L906.1,603.5 L916.2,646.1 L926.3,610.7 L936.3,675.0 L946.4,637.5 L956.5,698.1 L966.6,690.9 L976.7,680.8 L986.8,771.8 L996.9,653.3 L1006.9,676.5 L1017.0,655.5 L1027.1,646.1 L1037.2,699.6 L1047.3,690.9 L1057.4,649.7 L1067.5,666.3 L1077.5,685.8 L1087.6,656.2 L1097.7,697.4 L1107.8,693.1 L1117.9,669.2 L1128.0,637.5 L1138.1,640.3 L1148.2,679.3 L1158.2,692.3 L1168.3,663.5 L1178.4,688.0 L1188.5,713.4 L1198.6,636.7 L1208.7,638.2 L1218.8,651.9 L1228.8,636.0 L1238.9,682.2 L1249.0,724.1 L1259.1,714.7 L1269.2,657.7 L1279.3,634.6 L1289.4,661.3 L1299.4,631.7 L1309.5,680.8 L1319.6,684.4 L1329.7,683.7 L1339.8,609.3 L1349.9,648.3 L1360.0,639.6 L1370.0,625.2 L1380.1,647.6 L1390.2,676.5 L1400.3,660.6 L1410.4,596.3 L1420.5,661.3 L1430.6,641.1 L1440.6,659.1 L1450.7,651.6 L1460.8,657.6 L1470.9,674.7 L1481.0,666.4" fill="none" stroke="#f4b54a" stroke-width="1.25" stroke-linejoin="miter" stroke-miterlimit="10"/>
<path d="M896.0,676.5 L906.1,578.2 L916.2,619.4 L926.3,589.1 L936.3,656.2 L946.4,616.5 L956.5,680.1 L966.6,670.7 L976.7,661.3 L986.8,770.6 L996.9,634.6 L1006.9,659.1 L1017.0,641.8 L1027.1,628.1 L1037.2,681.5 L1047.3,671.4 L1057.4,625.2 L1067.5,640.3 L1077.5,661.3 L1087.6,631.4 L1097.7,678.6 L1107.8,677.2 L1117.9,650.5 L1128.0,610.7 L1138.1,620.8 L1148.2,653.3 L1158.2,676.5 L1168.3,644.7 L1178.4,666.3 L1188.5,692.3 L1198.6,602.8 L1208.7,619.4 L1218.8,623.7 L1228.8,619.4 L1238.9,666.3 L1249.0,710.4 L1259.1,694.4 L1269.2,629.5 L1279.3,612.9 L1289.4,643.2 L1299.4,615.8 L1309.5,660.6 L1319.6,655.5 L1329.7,666.3 L1339.8,595.6 L1349.9,631.7 L1360.0,620.1 L1370.0,604.2 L1380.1,630.2 L1390.2,657.0 L1400.3,643.2 L1410.4,573.9 L1420.5,632.4 L1430.6,620.8 L1440.6,638.2 L1450.7,621.1 L1460.8,636.6 L1470.9,657.4 L1481.0,649.7" fill="none" stroke="#3c8fe6" stroke-width="1.25" stroke-linejoin="miter" stroke-miterlimit="10"/></svg>
<div class="t" style="left:706.086px;width:400px;text-align:center;top:819.75px;font-size:6.9px;color:#3d434b;font-weight:normal;-webkit-text-stroke:0.25px #3d434b;">2024-02-21</div>
<div class="t" style="left:746.43px;width:400px;text-align:center;top:819.75px;font-size:6.9px;color:#3d434b;font-weight:normal;-webkit-text-stroke:0.25px #3d434b;">2024-02-25</div>
<div class="t" style="left:786.774px;width:400px;text-align:center;top:819.75px;font-size:6.9px;color:#3d434b;font-weight:normal;-webkit-text-stroke:0.25px #3d434b;">2024-02-29</div>
<div class="t" style="left:827.1179999999999px;width:400px;text-align:center;top:819.75px;font-size:6.9px;color:#3d434b;font-weight:normal;-webkit-text-stroke:0.25px #3d434b;">2024-03-04</div>
<div class="t" style="left:867.462px;width:400px;text-align:center;top:819.75px;font-size:6.9px;color:#3d434b;font-weight:normal;-webkit-text-stroke:0.25px #3d434b;">2024-03-08</div>
<div class="t" style="left:907.806px;width:400px;text-align:center;top:819.75px;font-size:6.9px;color:#3d434b;font-weight:normal;-webkit-text-stroke:0.25px #3d434b;">2024-03-12</div>
<div class="t" style="left:948.1500000000001px;width:400px;text-align:center;top:819.75px;font-size:6.9px;color:#3d434b;font-weight:normal;-webkit-text-stroke:0.25px #3d434b;">2024-03-16</div>
<div class="t" style="left:988.4940000000001px;width:400px;text-align:center;top:819.75px;font-size:6.9px;color:#3d434b;font-weight:normal;-webkit-text-stroke:0.25px #3d434b;">2024-03-20</div>
<div class="t" style="left:1028.838px;width:400px;text-align:center;top:819.75px;font-size:6.9px;color:#3d434b;font-weight:normal;-webkit-text-stroke:0.25px #3d434b;">2024-03-24</div>
<div class="t" style="left:1069.182px;width:400px;text-align:center;top:819.75px;font-size:6.9px;color:#3d434b;font-weight:normal;-webkit-text-stroke:0.25px #3d434b;">2024-03-28</div>
<div class="t" style="left:1109.526px;width:400px;text-align:center;top:819.75px;font-size:6.9px;color:#3d434b;font-weight:normal;-webkit-text-stroke:0.25px #3d434b;">2024-04-01</div>
<div class="t" style="left:1149.87px;width:400px;text-align:center;top:819.75px;font-size:6.9px;color:#3d434b;font-weight:normal;-webkit-text-stroke:0.25px #3d434b;">2024-04-05</div>
<div class="t" style="left:1190.214px;width:400px;text-align:center;top:819.75px;font-size:6.9px;color:#3d434b;font-weight:normal;-webkit-text-stroke:0.25px #3d434b;">2024-04-09</div>
<div class="t" style="left:1230.558px;width:400px;text-align:center;top:819.75px;font-size:6.9px;color:#3d434b;font-weight:normal;-webkit-text-stroke:0.25px #3d434b;">2024-04-13</div>
<div class="t" style="left:1270.902px;width:400px;text-align:center;top:819.75px;font-size:6.9px;color:#3d434b;font-weight:normal;-webkit-text-stroke:0.25px #3d434b;">2024-04-17</div>
<div class="t" style="left:988px;width:400px;text-align:center;top:834.60px;font-size:6.8px;color:#6b7280;font-weight:normal;">Created At Date</div>
<svg class="b" style="left:0;top:0" width="1600" height="900"><path d="M1130.4,261.6 C1148,253 1162,249 1172,249.2 C1190,249.5 1203,259 1206.5,273 C1209,287 1201,303.5 1190.5,303.5 C1180,303.5 1177,295 1181,287 C1186,277 1198,272.5 1212,273.5 C1232,275 1255,289 1265,318 C1272,340 1266,368 1252,392 C1244,407 1234,420 1226,432" fill="none" stroke="#ec6f9d" stroke-width="9.8" stroke-linecap="round" stroke-linejoin="round"/><path d="M1226,386 C1227,400 1228,420 1226,432 C1238,428 1252,424 1263,420" fill="none" stroke="#ec6f9d" stroke-width="9.6" stroke-linecap="round" stroke-linejoin="round"/></svg>
</body></html>
